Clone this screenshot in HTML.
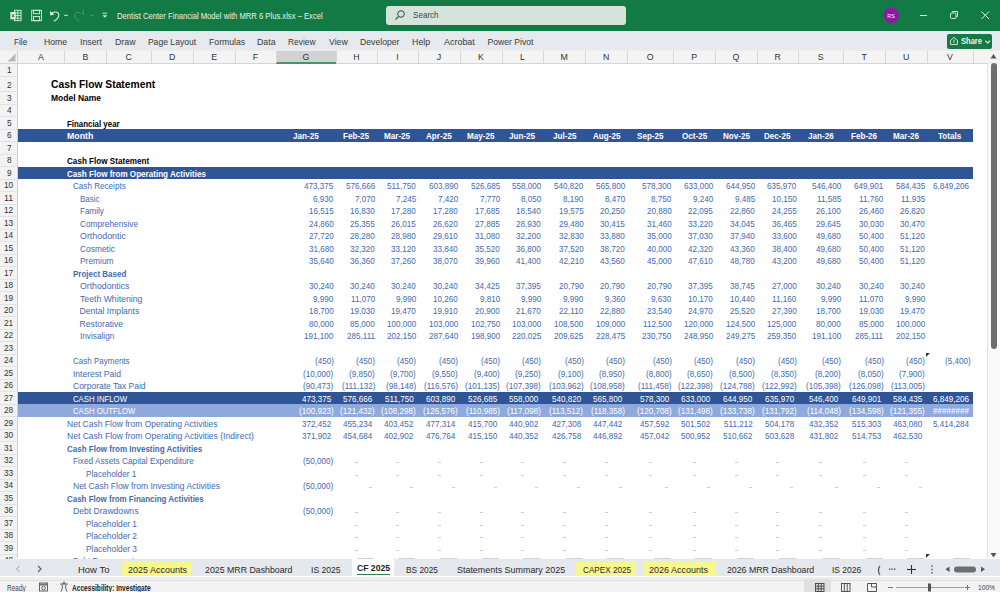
<!DOCTYPE html>
<html><head><meta charset="utf-8"><title>Excel</title>
<style>
html,body{margin:0;padding:0;width:1000px;height:592px;overflow:hidden;background:#fff;}
body{position:relative;font-family:"Liberation Sans", sans-serif;}
span{position:absolute;white-space:pre;font-family:"Liberation Sans", sans-serif;}
</style></head><body>
<div style="position:absolute;left:0px;top:0px;width:1000px;height:31px;background:#117A45;"></div>
<div style="position:absolute;left:385.5px;top:5.5px;width:240.0px;height:19.5px;background:#D5E4DA;border-radius:3px;"></div>
<span style="left:413.00px;top:10.92px;font-size:8.6px;line-height:8.6px;color:#3B4A40;font-weight:normal;transform:scaleX(0.9402);transform-origin:0 0;">Search</span>
<svg style="position:absolute;left:394px;top:9px" width="12" height="12" viewBox="0 0 12 12"><circle cx="7" cy="5" r="3.3" fill="none" stroke="#3B4A40" stroke-width="1"/><line x1="4.6" y1="7.4" x2="1.5" y2="10.5" stroke="#3B4A40" stroke-width="1.1"/></svg>
<span style="left:117.30px;top:11.92px;font-size:8.6px;line-height:8.6px;color:#E6F2EA;font-weight:normal;transform:scaleX(0.8899);transform-origin:0 0;">Dentist Center Financial Model with MRR 6 Plus.xlsx – Excel</span>
<svg style="position:absolute;left:0;top:0" width="120" height="31" viewBox="0 0 120 31">
<g fill="none" stroke="#DDEFE3" stroke-width="0.9">
<rect x="14.5" y="10.3" width="6.6" height="10.4"/>
<line x1="14.5" y1="13" x2="21.1" y2="13"/><line x1="14.5" y1="15.6" x2="21.1" y2="15.6"/><line x1="14.5" y1="18.2" x2="21.1" y2="18.2"/>
<line x1="17.8" y1="10.3" x2="17.8" y2="20.7"/>
</g>
<rect x="10.3" y="12" width="5.5" height="7.3" fill="#DDEFE3"/>
<path d="M11.9 14.2 L14.2 17.2 M14.2 14.2 L11.9 17.2" stroke="#1A6B40" stroke-width="0.9"/>
<g fill="none" stroke="#DDEFE3" stroke-width="0.9">
<rect x="31.7" y="10.3" width="9.8" height="10.4"/>
<rect x="33.6" y="10.3" width="6" height="3.4"/>
<rect x="33.6" y="16.5" width="6" height="4.2"/>
</g>
<g fill="none" stroke="#DDEFE3" stroke-width="1.1">
<path d="M51.3 13.8 C53.5 11.2 58.8 11.3 58.8 15.2 C58.8 17.8 56.5 19.6 53.8 21.2"/>
</g>
<path d="M49.8 11 L50.3 15.6 L54.5 14.6 Z" fill="#DDEFE3"/>
<line x1="64.2" y1="15.3" x2="67.8" y2="15.3" stroke="#DDEFE3" stroke-width="1"/>
<g fill="none" stroke="#4E9C70" stroke-width="1">
<path d="M81 13.8 C79 11.5 74.8 11.8 74.8 15.2 C74.8 17.8 77 19.6 79.2 21"/>
<line x1="83.2" y1="9.5" x2="83.2" y2="15"/>
<line x1="90" y1="15.3" x2="93.5" y2="15.3"/>
</g>
<line x1="102.5" y1="13.2" x2="107.2" y2="13.2" stroke="#DDEFE3" stroke-width="0.9"/>
<path d="M102.5 15.3 L107.2 15.3 L104.85 17.8 Z" fill="#DDEFE3"/>
</svg>
<svg style="position:absolute;left:870px;top:0" width="130" height="31" viewBox="0 0 130 31">
<circle cx="21.2" cy="15.3" r="7.8" fill="#8C1BA3"/>
<text x="21" y="18" text-anchor="middle" font-family="Liberation Sans" font-size="5.5" fill="#F5E8F8">RS</text>
<line x1="50" y1="15.5" x2="57" y2="15.5" stroke="#E3F1E8" stroke-width="1"/>
<g fill="none" stroke="#E3F1E8" stroke-width="0.9"><rect x="80.5" y="13" width="5.5" height="5.5" rx="1"/><path d="M82.3 12.5 L82.3 11.5 L87.5 11.5 L87.5 16.7 L86.5 16.7"/></g>
<g stroke="#E3F1E8" stroke-width="1"><line x1="111.5" y1="11.5" x2="119" y2="19"/><line x1="119" y1="11.5" x2="111.5" y2="19"/></g>
</svg>
<div style="position:absolute;left:0px;top:31px;width:1000px;height:17.5px;background:#E6E9ED;"></div>
<span style="left:14.00px;top:37.72px;font-size:8.6px;line-height:8.6px;color:#3A3A3A;font-weight:normal;transform:scaleX(0.9533);transform-origin:0 0;">File</span>
<span style="left:44.00px;top:37.72px;font-size:8.6px;line-height:8.6px;color:#3A3A3A;font-weight:normal;transform:scaleX(1.0121);transform-origin:0 0;">Home</span>
<span style="left:80.40px;top:37.72px;font-size:8.6px;line-height:8.6px;color:#3A3A3A;font-weight:normal;transform:scaleX(1.0143);transform-origin:0 0;">Insert</span>
<span style="left:114.80px;top:37.72px;font-size:8.6px;line-height:8.6px;color:#3A3A3A;font-weight:normal;transform:scaleX(1.0223);transform-origin:0 0;">Draw</span>
<span style="left:147.90px;top:37.72px;font-size:8.6px;line-height:8.6px;color:#3A3A3A;font-weight:normal;">Page Layout</span>
<span style="left:209.20px;top:37.72px;font-size:8.6px;line-height:8.6px;color:#3A3A3A;font-weight:normal;transform:scaleX(1.0108);transform-origin:0 0;">Formulas</span>
<span style="left:257.00px;top:37.72px;font-size:8.6px;line-height:8.6px;color:#3A3A3A;font-weight:normal;transform:scaleX(1.0191);transform-origin:0 0;">Data</span>
<span style="left:288.20px;top:37.72px;font-size:8.6px;line-height:8.6px;color:#3A3A3A;font-weight:normal;transform:scaleX(0.9760);transform-origin:0 0;">Review</span>
<span style="left:328.80px;top:37.72px;font-size:8.6px;line-height:8.6px;color:#3A3A3A;font-weight:normal;transform:scaleX(1.0178);transform-origin:0 0;">View</span>
<span style="left:360.20px;top:37.72px;font-size:8.6px;line-height:8.6px;color:#3A3A3A;font-weight:normal;transform:scaleX(1.0084);transform-origin:0 0;">Developer</span>
<span style="left:412.30px;top:37.72px;font-size:8.6px;line-height:8.6px;color:#3A3A3A;font-weight:normal;transform:scaleX(1.0297);transform-origin:0 0;">Help</span>
<span style="left:443.70px;top:37.72px;font-size:8.6px;line-height:8.6px;color:#3A3A3A;font-weight:normal;transform:scaleX(1.0400);transform-origin:0 0;">Acrobat</span>
<span style="left:487.60px;top:37.72px;font-size:8.6px;line-height:8.6px;color:#3A3A3A;font-weight:normal;">Power Pivot</span>
<div style="position:absolute;left:946.5px;top:33.5px;width:45.5px;height:15.0px;background:#177A46;border-radius:2px;"></div>
<span style="left:960.50px;top:37.35px;font-size:8.8px;line-height:8.8px;color:#E8F5EC;font-weight:bold;transform:scaleX(0.8589);transform-origin:0 0;">Share</span>
<svg style="position:absolute;left:946px;top:33px" width="46" height="16" viewBox="0 0 46 16">
<g fill="none" stroke="#D9EEDF" stroke-width="0.9"><path d="M4.5 7.5 L4.5 11.5 L11.5 11.5 L11.5 7.5"/><path d="M4.2 7.8 L8 4.3 L11.8 7.8"/><path d="M8 6.5 L8 10"/>
</g><path d="M39.3 7.7 L41.7 9.9 L44.1 7.7" fill="none" stroke="#D9EEDF" stroke-width="1.2"/></svg>
<div style="position:absolute;left:0px;top:48.5px;width:1000px;height:15.5px;background:#F4F4F4;"></div>
<div style="position:absolute;left:0px;top:48.5px;width:1000px;height:2.5px;background:#ECECEC;"></div>
<div style="position:absolute;left:0px;top:63px;width:988px;height:1px;background:#D6D6D6;"></div>
<svg style="position:absolute;left:0;top:50px" width="18" height="14"><path d="M15.5 3.5 L15.5 11.5 L7.5 11.5 Z" fill="#B8B8B8"/></svg>
<div style="position:absolute;left:17px;top:50px;width:1px;height:14px;background:#D0D0D0;"></div>
<div style="position:absolute;left:276px;top:50.5px;width:60px;height:13.0px;background:#D2D2D2;"></div>
<div style="position:absolute;left:276px;top:62.2px;width:60px;height:1.3999999999999986px;background:#4A9468;"></div>
<div style="position:absolute;left:64.0px;top:51px;width:1.0px;height:12px;background:#D8D8D8;"></div>
<div style="position:absolute;left:106.0px;top:51px;width:1.0px;height:12px;background:#D8D8D8;"></div>
<div style="position:absolute;left:150.5px;top:51px;width:1.0px;height:12px;background:#D8D8D8;"></div>
<div style="position:absolute;left:193.0px;top:51px;width:1.0px;height:12px;background:#D8D8D8;"></div>
<div style="position:absolute;left:234.5px;top:51px;width:1.0px;height:12px;background:#D8D8D8;"></div>
<div style="position:absolute;left:275.5px;top:51px;width:1.0px;height:12px;background:#D8D8D8;"></div>
<div style="position:absolute;left:335.5px;top:51px;width:1.0px;height:12px;background:#D8D8D8;"></div>
<div style="position:absolute;left:376.5px;top:51px;width:1.0px;height:12px;background:#D8D8D8;"></div>
<div style="position:absolute;left:417.5px;top:51px;width:1.0px;height:12px;background:#D8D8D8;"></div>
<div style="position:absolute;left:459.5px;top:51px;width:1.0px;height:12px;background:#D8D8D8;"></div>
<div style="position:absolute;left:501.5px;top:51px;width:1.0px;height:12px;background:#D8D8D8;"></div>
<div style="position:absolute;left:542.5px;top:51px;width:1.0px;height:12px;background:#D8D8D8;"></div>
<div style="position:absolute;left:585.0px;top:51px;width:1.0px;height:12px;background:#D8D8D8;"></div>
<div style="position:absolute;left:626.5px;top:51px;width:1.0px;height:12px;background:#D8D8D8;"></div>
<div style="position:absolute;left:673.0px;top:51px;width:1.0px;height:12px;background:#D8D8D8;"></div>
<div style="position:absolute;left:714.5px;top:51px;width:1.0px;height:12px;background:#D8D8D8;"></div>
<div style="position:absolute;left:756.5px;top:51px;width:1.0px;height:12px;background:#D8D8D8;"></div>
<div style="position:absolute;left:798.0px;top:51px;width:1.0px;height:12px;background:#D8D8D8;"></div>
<div style="position:absolute;left:842.5px;top:51px;width:1.0px;height:12px;background:#D8D8D8;"></div>
<div style="position:absolute;left:885.0px;top:51px;width:1.0px;height:12px;background:#D8D8D8;"></div>
<div style="position:absolute;left:926.5px;top:51px;width:1.0px;height:12px;background:#D8D8D8;"></div>
<div style="position:absolute;left:972.5px;top:51px;width:1.0px;height:12px;background:#D8D8D8;"></div>
<span style="left:38.07px;top:52.55px;font-size:8.8px;line-height:8.8px;color:#333333;font-weight:normal;">A</span>
<span style="left:82.57px;top:52.55px;font-size:8.8px;line-height:8.8px;color:#333333;font-weight:normal;">B</span>
<span style="left:125.57px;top:52.55px;font-size:8.8px;line-height:8.8px;color:#333333;font-weight:normal;">C</span>
<span style="left:169.07px;top:52.55px;font-size:8.8px;line-height:8.8px;color:#333333;font-weight:normal;">D</span>
<span style="left:211.32px;top:52.55px;font-size:8.8px;line-height:8.8px;color:#333333;font-weight:normal;">E</span>
<span style="left:252.81px;top:52.55px;font-size:8.8px;line-height:8.8px;color:#333333;font-weight:normal;">F</span>
<span style="left:302.58px;top:52.55px;font-size:8.8px;line-height:8.8px;color:#333333;font-weight:normal;">G</span>
<span style="left:353.32px;top:52.55px;font-size:8.8px;line-height:8.8px;color:#333333;font-weight:normal;">H</span>
<span style="left:396.28px;top:52.55px;font-size:8.8px;line-height:8.8px;color:#333333;font-weight:normal;">I</span>
<span style="left:436.80px;top:52.55px;font-size:8.8px;line-height:8.8px;color:#333333;font-weight:normal;">J</span>
<span style="left:478.07px;top:52.55px;font-size:8.8px;line-height:8.8px;color:#333333;font-weight:normal;">K</span>
<span style="left:520.05px;top:52.55px;font-size:8.8px;line-height:8.8px;color:#333333;font-weight:normal;">L</span>
<span style="left:560.59px;top:52.55px;font-size:8.8px;line-height:8.8px;color:#333333;font-weight:normal;">M</span>
<span style="left:603.07px;top:52.55px;font-size:8.8px;line-height:8.8px;color:#333333;font-weight:normal;">N</span>
<span style="left:646.83px;top:52.55px;font-size:8.8px;line-height:8.8px;color:#333333;font-weight:normal;">O</span>
<span style="left:691.32px;top:52.55px;font-size:8.8px;line-height:8.8px;color:#333333;font-weight:normal;">P</span>
<span style="left:732.58px;top:52.55px;font-size:8.8px;line-height:8.8px;color:#333333;font-weight:normal;">Q</span>
<span style="left:774.57px;top:52.55px;font-size:8.8px;line-height:8.8px;color:#333333;font-weight:normal;">R</span>
<span style="left:817.82px;top:52.55px;font-size:8.8px;line-height:8.8px;color:#333333;font-weight:normal;">S</span>
<span style="left:861.56px;top:52.55px;font-size:8.8px;line-height:8.8px;color:#333333;font-weight:normal;">T</span>
<span style="left:903.07px;top:52.55px;font-size:8.8px;line-height:8.8px;color:#333333;font-weight:normal;">U</span>
<span style="left:947.07px;top:52.55px;font-size:8.8px;line-height:8.8px;color:#333333;font-weight:normal;">V</span>
<div style="position:absolute;left:0px;top:64px;width:17.5px;height:494px;background:#F3F3F3;"></div>
<div style="position:absolute;left:17px;top:64px;width:1px;height:494px;background:#D0D0D0;"></div>
<div style="position:absolute;left:0px;top:76.0px;width:17px;height:1.0px;background:#E2E2E2;"></div>
<span style="left:6.70px;top:66.48px;font-size:9.0px;line-height:9.0px;color:#333333;font-weight:normal;transform:scaleX(0.9190);transform-origin:0 0;">1</span>
<div style="position:absolute;left:0px;top:91.0px;width:17px;height:1.0px;background:#E2E2E2;"></div>
<span style="left:6.70px;top:81.48px;font-size:9.0px;line-height:9.0px;color:#333333;font-weight:normal;transform:scaleX(0.9190);transform-origin:0 0;">2</span>
<div style="position:absolute;left:0px;top:103.5px;width:17px;height:1.0px;background:#E2E2E2;"></div>
<span style="left:6.70px;top:93.98px;font-size:9.0px;line-height:9.0px;color:#333333;font-weight:normal;transform:scaleX(0.9190);transform-origin:0 0;">3</span>
<div style="position:absolute;left:0px;top:116.0px;width:17px;height:1.0px;background:#E2E2E2;"></div>
<span style="left:6.70px;top:106.48px;font-size:9.0px;line-height:9.0px;color:#333333;font-weight:normal;transform:scaleX(0.9190);transform-origin:0 0;">4</span>
<div style="position:absolute;left:0px;top:128.5px;width:17px;height:1.0px;background:#E2E2E2;"></div>
<span style="left:6.70px;top:118.98px;font-size:9.0px;line-height:9.0px;color:#333333;font-weight:normal;transform:scaleX(0.9190);transform-origin:0 0;">5</span>
<div style="position:absolute;left:0px;top:141.0px;width:17px;height:1.0px;background:#E2E2E2;"></div>
<span style="left:6.70px;top:131.48px;font-size:9.0px;line-height:9.0px;color:#333333;font-weight:normal;transform:scaleX(0.9190);transform-origin:0 0;">6</span>
<div style="position:absolute;left:0px;top:153.5px;width:17px;height:1.0px;background:#E2E2E2;"></div>
<span style="left:6.70px;top:143.98px;font-size:9.0px;line-height:9.0px;color:#333333;font-weight:normal;transform:scaleX(0.9190);transform-origin:0 0;">7</span>
<div style="position:absolute;left:0px;top:166.0px;width:17px;height:1.0px;background:#E2E2E2;"></div>
<span style="left:6.70px;top:156.48px;font-size:9.0px;line-height:9.0px;color:#333333;font-weight:normal;transform:scaleX(0.9190);transform-origin:0 0;">8</span>
<div style="position:absolute;left:0px;top:178.5px;width:17px;height:1.0px;background:#E2E2E2;"></div>
<span style="left:6.70px;top:168.98px;font-size:9.0px;line-height:9.0px;color:#333333;font-weight:normal;transform:scaleX(0.9190);transform-origin:0 0;">9</span>
<div style="position:absolute;left:0px;top:191.0px;width:17px;height:1.0px;background:#E2E2E2;"></div>
<span style="left:4.40px;top:181.48px;font-size:9.0px;line-height:9.0px;color:#333333;font-weight:normal;transform:scaleX(0.9190);transform-origin:0 0;">10</span>
<div style="position:absolute;left:0px;top:203.5px;width:17px;height:1.0px;background:#E2E2E2;"></div>
<span style="left:4.40px;top:193.98px;font-size:9.0px;line-height:9.0px;color:#333333;font-weight:normal;transform:scaleX(0.9847);transform-origin:0 0;">11</span>
<div style="position:absolute;left:0px;top:216.0px;width:17px;height:1.0px;background:#E2E2E2;"></div>
<span style="left:4.40px;top:206.48px;font-size:9.0px;line-height:9.0px;color:#333333;font-weight:normal;transform:scaleX(0.9190);transform-origin:0 0;">12</span>
<div style="position:absolute;left:0px;top:228.5px;width:17px;height:1.0px;background:#E2E2E2;"></div>
<span style="left:4.40px;top:218.98px;font-size:9.0px;line-height:9.0px;color:#333333;font-weight:normal;transform:scaleX(0.9190);transform-origin:0 0;">13</span>
<div style="position:absolute;left:0px;top:241.0px;width:17px;height:1.0px;background:#E2E2E2;"></div>
<span style="left:4.40px;top:231.48px;font-size:9.0px;line-height:9.0px;color:#333333;font-weight:normal;transform:scaleX(0.9190);transform-origin:0 0;">14</span>
<div style="position:absolute;left:0px;top:253.5px;width:17px;height:1.0px;background:#E2E2E2;"></div>
<span style="left:4.40px;top:243.98px;font-size:9.0px;line-height:9.0px;color:#333333;font-weight:normal;transform:scaleX(0.9190);transform-origin:0 0;">15</span>
<div style="position:absolute;left:0px;top:266.0px;width:17px;height:1.0px;background:#E2E2E2;"></div>
<span style="left:4.40px;top:256.48px;font-size:9.0px;line-height:9.0px;color:#333333;font-weight:normal;transform:scaleX(0.9190);transform-origin:0 0;">16</span>
<div style="position:absolute;left:0px;top:278.5px;width:17px;height:1.0px;background:#E2E2E2;"></div>
<span style="left:4.40px;top:268.98px;font-size:9.0px;line-height:9.0px;color:#333333;font-weight:normal;transform:scaleX(0.9190);transform-origin:0 0;">17</span>
<div style="position:absolute;left:0px;top:291.0px;width:17px;height:1.0px;background:#E2E2E2;"></div>
<span style="left:4.40px;top:281.48px;font-size:9.0px;line-height:9.0px;color:#333333;font-weight:normal;transform:scaleX(0.9190);transform-origin:0 0;">18</span>
<div style="position:absolute;left:0px;top:303.5px;width:17px;height:1.0px;background:#E2E2E2;"></div>
<span style="left:4.40px;top:293.98px;font-size:9.0px;line-height:9.0px;color:#333333;font-weight:normal;transform:scaleX(0.9190);transform-origin:0 0;">19</span>
<div style="position:absolute;left:0px;top:316.0px;width:17px;height:1.0px;background:#E2E2E2;"></div>
<span style="left:4.40px;top:306.48px;font-size:9.0px;line-height:9.0px;color:#333333;font-weight:normal;transform:scaleX(0.9190);transform-origin:0 0;">20</span>
<div style="position:absolute;left:0px;top:328.5px;width:17px;height:1.0px;background:#E2E2E2;"></div>
<span style="left:4.40px;top:318.98px;font-size:9.0px;line-height:9.0px;color:#333333;font-weight:normal;transform:scaleX(0.9190);transform-origin:0 0;">21</span>
<div style="position:absolute;left:0px;top:341.0px;width:17px;height:1.0px;background:#E2E2E2;"></div>
<span style="left:4.40px;top:331.48px;font-size:9.0px;line-height:9.0px;color:#333333;font-weight:normal;transform:scaleX(0.9190);transform-origin:0 0;">22</span>
<div style="position:absolute;left:0px;top:353.5px;width:17px;height:1.0px;background:#E2E2E2;"></div>
<span style="left:4.40px;top:343.98px;font-size:9.0px;line-height:9.0px;color:#333333;font-weight:normal;transform:scaleX(0.9190);transform-origin:0 0;">23</span>
<div style="position:absolute;left:0px;top:366.0px;width:17px;height:1.0px;background:#E2E2E2;"></div>
<span style="left:4.40px;top:356.48px;font-size:9.0px;line-height:9.0px;color:#333333;font-weight:normal;transform:scaleX(0.9190);transform-origin:0 0;">24</span>
<div style="position:absolute;left:0px;top:378.5px;width:17px;height:1.0px;background:#E2E2E2;"></div>
<span style="left:4.40px;top:368.98px;font-size:9.0px;line-height:9.0px;color:#333333;font-weight:normal;transform:scaleX(0.9190);transform-origin:0 0;">25</span>
<div style="position:absolute;left:0px;top:391.0px;width:17px;height:1.0px;background:#E2E2E2;"></div>
<span style="left:4.40px;top:381.48px;font-size:9.0px;line-height:9.0px;color:#333333;font-weight:normal;transform:scaleX(0.9190);transform-origin:0 0;">26</span>
<div style="position:absolute;left:0px;top:403.5px;width:17px;height:1.0px;background:#E2E2E2;"></div>
<span style="left:4.40px;top:393.98px;font-size:9.0px;line-height:9.0px;color:#333333;font-weight:normal;transform:scaleX(0.9190);transform-origin:0 0;">27</span>
<div style="position:absolute;left:0px;top:416.0px;width:17px;height:1.0px;background:#E2E2E2;"></div>
<span style="left:4.40px;top:406.48px;font-size:9.0px;line-height:9.0px;color:#333333;font-weight:normal;transform:scaleX(0.9190);transform-origin:0 0;">28</span>
<div style="position:absolute;left:0px;top:428.5px;width:17px;height:1.0px;background:#E2E2E2;"></div>
<span style="left:4.40px;top:418.98px;font-size:9.0px;line-height:9.0px;color:#333333;font-weight:normal;transform:scaleX(0.9190);transform-origin:0 0;">29</span>
<div style="position:absolute;left:0px;top:441.0px;width:17px;height:1.0px;background:#E2E2E2;"></div>
<span style="left:4.40px;top:431.48px;font-size:9.0px;line-height:9.0px;color:#333333;font-weight:normal;transform:scaleX(0.9190);transform-origin:0 0;">30</span>
<div style="position:absolute;left:0px;top:453.5px;width:17px;height:1.0px;background:#E2E2E2;"></div>
<span style="left:4.40px;top:443.98px;font-size:9.0px;line-height:9.0px;color:#333333;font-weight:normal;transform:scaleX(0.9190);transform-origin:0 0;">31</span>
<div style="position:absolute;left:0px;top:466.0px;width:17px;height:1.0px;background:#E2E2E2;"></div>
<span style="left:4.40px;top:456.48px;font-size:9.0px;line-height:9.0px;color:#333333;font-weight:normal;transform:scaleX(0.9190);transform-origin:0 0;">32</span>
<div style="position:absolute;left:0px;top:478.5px;width:17px;height:1.0px;background:#E2E2E2;"></div>
<span style="left:4.40px;top:468.98px;font-size:9.0px;line-height:9.0px;color:#333333;font-weight:normal;transform:scaleX(0.9190);transform-origin:0 0;">33</span>
<div style="position:absolute;left:0px;top:491.0px;width:17px;height:1.0px;background:#E2E2E2;"></div>
<span style="left:4.40px;top:481.48px;font-size:9.0px;line-height:9.0px;color:#333333;font-weight:normal;transform:scaleX(0.9190);transform-origin:0 0;">34</span>
<div style="position:absolute;left:0px;top:503.5px;width:17px;height:1.0px;background:#E2E2E2;"></div>
<span style="left:4.40px;top:493.98px;font-size:9.0px;line-height:9.0px;color:#333333;font-weight:normal;transform:scaleX(0.9190);transform-origin:0 0;">35</span>
<div style="position:absolute;left:0px;top:516.0px;width:17px;height:1.0px;background:#E2E2E2;"></div>
<span style="left:4.40px;top:506.48px;font-size:9.0px;line-height:9.0px;color:#333333;font-weight:normal;transform:scaleX(0.9190);transform-origin:0 0;">36</span>
<div style="position:absolute;left:0px;top:528.5px;width:17px;height:1.0px;background:#E2E2E2;"></div>
<span style="left:4.40px;top:518.98px;font-size:9.0px;line-height:9.0px;color:#333333;font-weight:normal;transform:scaleX(0.9190);transform-origin:0 0;">37</span>
<div style="position:absolute;left:0px;top:541.0px;width:17px;height:1.0px;background:#E2E2E2;"></div>
<span style="left:4.40px;top:531.48px;font-size:9.0px;line-height:9.0px;color:#333333;font-weight:normal;transform:scaleX(0.9190);transform-origin:0 0;">38</span>
<div style="position:absolute;left:0px;top:553.5px;width:17px;height:1.0px;background:#E2E2E2;"></div>
<span style="left:4.40px;top:543.98px;font-size:9.0px;line-height:9.0px;color:#333333;font-weight:normal;transform:scaleX(0.9190);transform-origin:0 0;">39</span>
<div style="position:absolute;left:0px;top:566.0px;width:17px;height:1.0px;background:#E2E2E2;"></div>
<span style="left:4.40px;top:556.48px;font-size:9.0px;line-height:9.0px;color:#333333;font-weight:normal;transform:scaleX(0.9190);transform-origin:0 0;">40</span>
<div style="position:absolute;left:18px;top:64px;width:969px;height:494px;background:#FFFFFF;"></div>
<div style="position:absolute;left:18px;top:129.0px;width:955px;height:12.5px;background:#2F5597;"></div>
<div style="position:absolute;left:18px;top:166.5px;width:955px;height:12.5px;background:#2F5597;"></div>
<div style="position:absolute;left:18px;top:391.5px;width:955px;height:12.5px;background:#2F5597;"></div>
<div style="position:absolute;left:18px;top:404.0px;width:955px;height:12.5px;background:#8EA9DB;"></div>
<span style="left:51.00px;top:79.98px;font-size:10.3px;line-height:10.3px;color:#000;font-weight:bold;">Cash Flow Statement</span>
<span style="left:51.00px;top:94.12px;font-size:8.6px;line-height:8.6px;color:#000;font-weight:bold;transform:scaleX(0.9878);transform-origin:0 0;">Model Name</span>
<span style="left:66.90px;top:119.82px;font-size:8.6px;line-height:8.6px;color:#000;font-weight:bold;transform:scaleX(0.9177);transform-origin:0 0;">Financial year</span>
<span style="left:66.90px;top:132.32px;font-size:8.6px;line-height:8.6px;color:#FFFFFF;font-weight:bold;transform:scaleX(1.0245);transform-origin:0 0;">Month</span>
<span style="left:66.70px;top:157.32px;font-size:8.6px;line-height:8.6px;color:#000;font-weight:bold;transform:scaleX(0.9447);transform-origin:0 0;">Cash Flow Statement</span>
<span style="left:66.70px;top:169.82px;font-size:8.6px;line-height:8.6px;color:#FFFFFF;font-weight:bold;transform:scaleX(0.9404);transform-origin:0 0;">Cash Flow from Operating Activities</span>
<span style="left:293.18px;top:132.32px;font-size:8.6px;line-height:8.6px;color:#FFFFFF;font-weight:bold;transform:scaleX(0.9419);transform-origin:0 0;">Jan-25</span>
<span style="left:343.46px;top:132.32px;font-size:8.6px;line-height:8.6px;color:#FFFFFF;font-weight:bold;transform:scaleX(0.9419);transform-origin:0 0;">Feb-25</span>
<span style="left:384.45px;top:132.32px;font-size:8.6px;line-height:8.6px;color:#FFFFFF;font-weight:bold;transform:scaleX(0.9419);transform-origin:0 0;">Mar-25</span>
<span style="left:426.18px;top:132.32px;font-size:8.6px;line-height:8.6px;color:#FFFFFF;font-weight:bold;transform:scaleX(0.9419);transform-origin:0 0;">Apr-25</span>
<span style="left:467.28px;top:132.32px;font-size:8.6px;line-height:8.6px;color:#FFFFFF;font-weight:bold;transform:scaleX(0.9419);transform-origin:0 0;">May-25</span>
<span style="left:509.46px;top:132.32px;font-size:8.6px;line-height:8.6px;color:#FFFFFF;font-weight:bold;transform:scaleX(0.9419);transform-origin:0 0;">Jun-25</span>
<span style="left:552.55px;top:132.32px;font-size:8.6px;line-height:8.6px;color:#FFFFFF;font-weight:bold;transform:scaleX(0.9419);transform-origin:0 0;">Jul-25</span>
<span style="left:592.53px;top:132.32px;font-size:8.6px;line-height:8.6px;color:#FFFFFF;font-weight:bold;transform:scaleX(0.9419);transform-origin:0 0;">Aug-25</span>
<span style="left:636.98px;top:132.32px;font-size:8.6px;line-height:8.6px;color:#FFFFFF;font-weight:bold;transform:scaleX(0.9419);transform-origin:0 0;">Sep-25</span>
<span style="left:681.65px;top:132.32px;font-size:8.6px;line-height:8.6px;color:#FFFFFF;font-weight:bold;transform:scaleX(0.9419);transform-origin:0 0;">Oct-25</span>
<span style="left:722.51px;top:132.32px;font-size:8.6px;line-height:8.6px;color:#FFFFFF;font-weight:bold;transform:scaleX(0.9419);transform-origin:0 0;">Nov-25</span>
<span style="left:764.48px;top:132.32px;font-size:8.6px;line-height:8.6px;color:#FFFFFF;font-weight:bold;transform:scaleX(0.9419);transform-origin:0 0;">Dec-25</span>
<span style="left:807.93px;top:132.32px;font-size:8.6px;line-height:8.6px;color:#FFFFFF;font-weight:bold;transform:scaleX(0.9419);transform-origin:0 0;">Jan-26</span>
<span style="left:851.21px;top:132.32px;font-size:8.6px;line-height:8.6px;color:#FFFFFF;font-weight:bold;transform:scaleX(0.9419);transform-origin:0 0;">Feb-26</span>
<span style="left:893.20px;top:132.32px;font-size:8.6px;line-height:8.6px;color:#FFFFFF;font-weight:bold;transform:scaleX(0.9419);transform-origin:0 0;">Mar-26</span>
<span style="left:938.38px;top:132.32px;font-size:8.6px;line-height:8.6px;color:#FFFFFF;font-weight:bold;transform:scaleX(0.9419);transform-origin:0 0;">Totals</span>
<span style="left:72.90px;top:182.32px;font-size:8.6px;line-height:8.6px;color:#416BAE;font-weight:normal;transform:scaleX(0.9431);transform-origin:0 0;">Cash Receipts</span>
<span style="left:79.60px;top:194.82px;font-size:8.6px;line-height:8.6px;color:#416BAE;font-weight:normal;transform:scaleX(0.9327);transform-origin:0 0;">Basic</span>
<span style="left:79.60px;top:207.32px;font-size:8.6px;line-height:8.6px;color:#416BAE;font-weight:normal;transform:scaleX(0.9446);transform-origin:0 0;">Family</span>
<span style="left:79.60px;top:219.82px;font-size:8.6px;line-height:8.6px;color:#416BAE;font-weight:normal;transform:scaleX(0.9637);transform-origin:0 0;">Comprehensive</span>
<span style="left:79.60px;top:232.32px;font-size:8.6px;line-height:8.6px;color:#416BAE;font-weight:normal;transform:scaleX(1.0333);transform-origin:0 0;">Orthodontic</span>
<span style="left:79.60px;top:244.82px;font-size:8.6px;line-height:8.6px;color:#416BAE;font-weight:normal;transform:scaleX(0.9773);transform-origin:0 0;">Cosmetic</span>
<span style="left:79.60px;top:257.32px;font-size:8.6px;line-height:8.6px;color:#416BAE;font-weight:normal;transform:scaleX(0.9774);transform-origin:0 0;">Premium</span>
<span style="left:73.20px;top:269.82px;font-size:8.6px;line-height:8.6px;color:#416BAE;font-weight:bold;transform:scaleX(0.9300);transform-origin:0 0;">Project Based</span>
<span style="left:79.60px;top:282.32px;font-size:8.6px;line-height:8.6px;color:#416BAE;font-weight:normal;transform:scaleX(1.0140);transform-origin:0 0;">Orthodontics</span>
<span style="left:79.60px;top:294.82px;font-size:8.6px;line-height:8.6px;color:#416BAE;font-weight:normal;transform:scaleX(1.0110);transform-origin:0 0;">Teeth Whitening</span>
<span style="left:79.60px;top:307.32px;font-size:8.6px;line-height:8.6px;color:#416BAE;font-weight:normal;">Dental Implants</span>
<span style="left:79.60px;top:319.82px;font-size:8.6px;line-height:8.6px;color:#416BAE;font-weight:normal;">Restorative</span>
<span style="left:79.60px;top:332.32px;font-size:8.6px;line-height:8.6px;color:#416BAE;font-weight:normal;transform:scaleX(0.9574);transform-origin:0 0;">Invisalign</span>
<span style="left:73.00px;top:357.32px;font-size:8.6px;line-height:8.6px;color:#416BAE;font-weight:normal;transform:scaleX(0.9331);transform-origin:0 0;">Cash Payments</span>
<span style="left:73.00px;top:369.82px;font-size:8.6px;line-height:8.6px;color:#416BAE;font-weight:normal;transform:scaleX(0.9928);transform-origin:0 0;">Interest Paid</span>
<span style="left:73.00px;top:382.32px;font-size:8.6px;line-height:8.6px;color:#416BAE;font-weight:normal;transform:scaleX(0.9883);transform-origin:0 0;">Corporate Tax Paid</span>
<span style="left:73.00px;top:394.82px;font-size:8.6px;line-height:8.6px;color:#FFFFFF;font-weight:normal;transform:scaleX(0.9048);transform-origin:0 0;">CASH INFLOW</span>
<span style="left:73.00px;top:407.32px;font-size:8.6px;line-height:8.6px;color:#FFFFFF;font-weight:normal;transform:scaleX(0.9000);transform-origin:0 0;">CASH OUTFLOW</span>
<span style="left:67.00px;top:419.82px;font-size:8.6px;line-height:8.6px;color:#416BAE;font-weight:normal;transform:scaleX(0.9912);transform-origin:0 0;">Net Cash Flow from Operating Activities</span>
<span style="left:67.00px;top:432.32px;font-size:8.6px;line-height:8.6px;color:#416BAE;font-weight:normal;transform:scaleX(0.9935);transform-origin:0 0;">Net Cash Flow from Operating Activities (Indirect)</span>
<span style="left:67.00px;top:444.82px;font-size:8.6px;line-height:8.6px;color:#416BAE;font-weight:bold;transform:scaleX(0.9328);transform-origin:0 0;">Cash Flow from Investing Activities</span>
<span style="left:73.00px;top:457.32px;font-size:8.6px;line-height:8.6px;color:#416BAE;font-weight:normal;transform:scaleX(0.9591);transform-origin:0 0;">Fixed Assets Capital Expenditure</span>
<span style="left:85.60px;top:469.82px;font-size:8.6px;line-height:8.6px;color:#416BAE;font-weight:normal;transform:scaleX(0.9591);transform-origin:0 0;">Placeholder 1</span>
<span style="left:73.00px;top:482.32px;font-size:8.6px;line-height:8.6px;color:#416BAE;font-weight:normal;transform:scaleX(0.9893);transform-origin:0 0;">Net Cash Flow from Investing Activities</span>
<span style="left:67.00px;top:494.82px;font-size:8.6px;line-height:8.6px;color:#416BAE;font-weight:bold;transform:scaleX(0.9256);transform-origin:0 0;">Cash Flow from Financing Activities</span>
<span style="left:73.00px;top:507.32px;font-size:8.6px;line-height:8.6px;color:#416BAE;font-weight:normal;">Debt Drawdowns</span>
<span style="left:85.60px;top:519.82px;font-size:8.6px;line-height:8.6px;color:#416BAE;font-weight:normal;transform:scaleX(0.9705);transform-origin:0 0;">Placeholder 1</span>
<span style="left:85.60px;top:532.32px;font-size:8.6px;line-height:8.6px;color:#416BAE;font-weight:normal;transform:scaleX(0.9705);transform-origin:0 0;">Placeholder 2</span>
<span style="left:85.60px;top:544.82px;font-size:8.6px;line-height:8.6px;color:#416BAE;font-weight:normal;transform:scaleX(0.9705);transform-origin:0 0;">Placeholder 3</span>
<span style="left:73.00px;top:557.32px;font-size:8.6px;line-height:8.6px;color:#416BAE;font-weight:normal;transform:scaleX(0.9419);transform-origin:0 0;">Debt Repayments</span>
<span style="left:304.04px;top:182.32px;font-size:8.6px;line-height:8.6px;color:#416BAE;font-weight:normal;transform:scaleX(0.9419);transform-origin:0 0;">473,375</span>
<span style="left:345.64px;top:182.32px;font-size:8.6px;line-height:8.6px;color:#416BAE;font-weight:normal;transform:scaleX(0.9419);transform-origin:0 0;">576,666</span>
<span style="left:387.24px;top:182.32px;font-size:8.6px;line-height:8.6px;color:#416BAE;font-weight:normal;transform:scaleX(0.9419);transform-origin:0 0;">511,750</span>
<span style="left:428.64px;top:182.32px;font-size:8.6px;line-height:8.6px;color:#416BAE;font-weight:normal;transform:scaleX(0.9419);transform-origin:0 0;">603,890</span>
<span style="left:470.64px;top:182.32px;font-size:8.6px;line-height:8.6px;color:#416BAE;font-weight:normal;transform:scaleX(0.9419);transform-origin:0 0;">526,685</span>
<span style="left:511.64px;top:182.32px;font-size:8.6px;line-height:8.6px;color:#416BAE;font-weight:normal;transform:scaleX(0.9419);transform-origin:0 0;">558,000</span>
<span style="left:554.14px;top:182.32px;font-size:8.6px;line-height:8.6px;color:#416BAE;font-weight:normal;transform:scaleX(0.9419);transform-origin:0 0;">540,820</span>
<span style="left:595.64px;top:182.32px;font-size:8.6px;line-height:8.6px;color:#416BAE;font-weight:normal;transform:scaleX(0.9419);transform-origin:0 0;">565,800</span>
<span style="left:642.14px;top:182.32px;font-size:8.6px;line-height:8.6px;color:#416BAE;font-weight:normal;transform:scaleX(0.9419);transform-origin:0 0;">578,300</span>
<span style="left:683.64px;top:182.32px;font-size:8.6px;line-height:8.6px;color:#416BAE;font-weight:normal;transform:scaleX(0.9419);transform-origin:0 0;">633,000</span>
<span style="left:725.64px;top:182.32px;font-size:8.6px;line-height:8.6px;color:#416BAE;font-weight:normal;transform:scaleX(0.9419);transform-origin:0 0;">644,950</span>
<span style="left:767.14px;top:182.32px;font-size:8.6px;line-height:8.6px;color:#416BAE;font-weight:normal;transform:scaleX(0.9419);transform-origin:0 0;">635,970</span>
<span style="left:811.64px;top:182.32px;font-size:8.6px;line-height:8.6px;color:#416BAE;font-weight:normal;transform:scaleX(0.9419);transform-origin:0 0;">546,400</span>
<span style="left:854.14px;top:182.32px;font-size:8.6px;line-height:8.6px;color:#416BAE;font-weight:normal;transform:scaleX(0.9419);transform-origin:0 0;">649,901</span>
<span style="left:895.64px;top:182.32px;font-size:8.6px;line-height:8.6px;color:#416BAE;font-weight:normal;transform:scaleX(0.9419);transform-origin:0 0;">584,435</span>
<span style="left:932.59px;top:182.32px;font-size:8.6px;line-height:8.6px;color:#416BAE;font-weight:normal;transform:scaleX(0.9419);transform-origin:0 0;">6,849,206</span>
<span style="left:313.05px;top:194.82px;font-size:8.6px;line-height:8.6px;color:#416BAE;font-weight:normal;transform:scaleX(0.9419);transform-origin:0 0;">6,930</span>
<span style="left:354.65px;top:194.82px;font-size:8.6px;line-height:8.6px;color:#416BAE;font-weight:normal;transform:scaleX(0.9419);transform-origin:0 0;">7,070</span>
<span style="left:395.65px;top:194.82px;font-size:8.6px;line-height:8.6px;color:#416BAE;font-weight:normal;transform:scaleX(0.9419);transform-origin:0 0;">7,245</span>
<span style="left:437.65px;top:194.82px;font-size:8.6px;line-height:8.6px;color:#416BAE;font-weight:normal;transform:scaleX(0.9419);transform-origin:0 0;">7,420</span>
<span style="left:479.65px;top:194.82px;font-size:8.6px;line-height:8.6px;color:#416BAE;font-weight:normal;transform:scaleX(0.9419);transform-origin:0 0;">7,770</span>
<span style="left:520.65px;top:194.82px;font-size:8.6px;line-height:8.6px;color:#416BAE;font-weight:normal;transform:scaleX(0.9419);transform-origin:0 0;">8,050</span>
<span style="left:563.15px;top:194.82px;font-size:8.6px;line-height:8.6px;color:#416BAE;font-weight:normal;transform:scaleX(0.9419);transform-origin:0 0;">8,190</span>
<span style="left:604.65px;top:194.82px;font-size:8.6px;line-height:8.6px;color:#416BAE;font-weight:normal;transform:scaleX(0.9419);transform-origin:0 0;">8,470</span>
<span style="left:651.15px;top:194.82px;font-size:8.6px;line-height:8.6px;color:#416BAE;font-weight:normal;transform:scaleX(0.9419);transform-origin:0 0;">8,750</span>
<span style="left:692.65px;top:194.82px;font-size:8.6px;line-height:8.6px;color:#416BAE;font-weight:normal;transform:scaleX(0.9419);transform-origin:0 0;">9,240</span>
<span style="left:734.65px;top:194.82px;font-size:8.6px;line-height:8.6px;color:#416BAE;font-weight:normal;transform:scaleX(0.9419);transform-origin:0 0;">9,485</span>
<span style="left:771.64px;top:194.82px;font-size:8.6px;line-height:8.6px;color:#416BAE;font-weight:normal;transform:scaleX(0.9419);transform-origin:0 0;">10,150</span>
<span style="left:816.75px;top:194.82px;font-size:8.6px;line-height:8.6px;color:#416BAE;font-weight:normal;transform:scaleX(0.9419);transform-origin:0 0;">11,585</span>
<span style="left:859.25px;top:194.82px;font-size:8.6px;line-height:8.6px;color:#416BAE;font-weight:normal;transform:scaleX(0.9419);transform-origin:0 0;">11,760</span>
<span style="left:900.75px;top:194.82px;font-size:8.6px;line-height:8.6px;color:#416BAE;font-weight:normal;transform:scaleX(0.9419);transform-origin:0 0;">11,935</span>
<span style="left:308.54px;top:207.32px;font-size:8.6px;line-height:8.6px;color:#416BAE;font-weight:normal;transform:scaleX(0.9419);transform-origin:0 0;">16,515</span>
<span style="left:350.14px;top:207.32px;font-size:8.6px;line-height:8.6px;color:#416BAE;font-weight:normal;transform:scaleX(0.9419);transform-origin:0 0;">16,830</span>
<span style="left:391.14px;top:207.32px;font-size:8.6px;line-height:8.6px;color:#416BAE;font-weight:normal;transform:scaleX(0.9419);transform-origin:0 0;">17,280</span>
<span style="left:433.14px;top:207.32px;font-size:8.6px;line-height:8.6px;color:#416BAE;font-weight:normal;transform:scaleX(0.9419);transform-origin:0 0;">17,280</span>
<span style="left:475.14px;top:207.32px;font-size:8.6px;line-height:8.6px;color:#416BAE;font-weight:normal;transform:scaleX(0.9419);transform-origin:0 0;">17,685</span>
<span style="left:516.14px;top:207.32px;font-size:8.6px;line-height:8.6px;color:#416BAE;font-weight:normal;transform:scaleX(0.9419);transform-origin:0 0;">18,540</span>
<span style="left:558.64px;top:207.32px;font-size:8.6px;line-height:8.6px;color:#416BAE;font-weight:normal;transform:scaleX(0.9419);transform-origin:0 0;">19,575</span>
<span style="left:600.14px;top:207.32px;font-size:8.6px;line-height:8.6px;color:#416BAE;font-weight:normal;transform:scaleX(0.9419);transform-origin:0 0;">20,250</span>
<span style="left:646.64px;top:207.32px;font-size:8.6px;line-height:8.6px;color:#416BAE;font-weight:normal;transform:scaleX(0.9419);transform-origin:0 0;">20,880</span>
<span style="left:688.14px;top:207.32px;font-size:8.6px;line-height:8.6px;color:#416BAE;font-weight:normal;transform:scaleX(0.9419);transform-origin:0 0;">22,095</span>
<span style="left:730.14px;top:207.32px;font-size:8.6px;line-height:8.6px;color:#416BAE;font-weight:normal;transform:scaleX(0.9419);transform-origin:0 0;">22,860</span>
<span style="left:771.64px;top:207.32px;font-size:8.6px;line-height:8.6px;color:#416BAE;font-weight:normal;transform:scaleX(0.9419);transform-origin:0 0;">24,255</span>
<span style="left:816.14px;top:207.32px;font-size:8.6px;line-height:8.6px;color:#416BAE;font-weight:normal;transform:scaleX(0.9419);transform-origin:0 0;">26,100</span>
<span style="left:858.64px;top:207.32px;font-size:8.6px;line-height:8.6px;color:#416BAE;font-weight:normal;transform:scaleX(0.9419);transform-origin:0 0;">26,460</span>
<span style="left:900.14px;top:207.32px;font-size:8.6px;line-height:8.6px;color:#416BAE;font-weight:normal;transform:scaleX(0.9419);transform-origin:0 0;">26,820</span>
<span style="left:308.54px;top:219.82px;font-size:8.6px;line-height:8.6px;color:#416BAE;font-weight:normal;transform:scaleX(0.9419);transform-origin:0 0;">24,860</span>
<span style="left:350.14px;top:219.82px;font-size:8.6px;line-height:8.6px;color:#416BAE;font-weight:normal;transform:scaleX(0.9419);transform-origin:0 0;">25,355</span>
<span style="left:391.14px;top:219.82px;font-size:8.6px;line-height:8.6px;color:#416BAE;font-weight:normal;transform:scaleX(0.9419);transform-origin:0 0;">26,015</span>
<span style="left:433.14px;top:219.82px;font-size:8.6px;line-height:8.6px;color:#416BAE;font-weight:normal;transform:scaleX(0.9419);transform-origin:0 0;">26,620</span>
<span style="left:475.14px;top:219.82px;font-size:8.6px;line-height:8.6px;color:#416BAE;font-weight:normal;transform:scaleX(0.9419);transform-origin:0 0;">27,885</span>
<span style="left:516.14px;top:219.82px;font-size:8.6px;line-height:8.6px;color:#416BAE;font-weight:normal;transform:scaleX(0.9419);transform-origin:0 0;">28,930</span>
<span style="left:558.64px;top:219.82px;font-size:8.6px;line-height:8.6px;color:#416BAE;font-weight:normal;transform:scaleX(0.9419);transform-origin:0 0;">29,480</span>
<span style="left:600.14px;top:219.82px;font-size:8.6px;line-height:8.6px;color:#416BAE;font-weight:normal;transform:scaleX(0.9419);transform-origin:0 0;">30,415</span>
<span style="left:646.64px;top:219.82px;font-size:8.6px;line-height:8.6px;color:#416BAE;font-weight:normal;transform:scaleX(0.9419);transform-origin:0 0;">31,460</span>
<span style="left:688.14px;top:219.82px;font-size:8.6px;line-height:8.6px;color:#416BAE;font-weight:normal;transform:scaleX(0.9419);transform-origin:0 0;">33,220</span>
<span style="left:730.14px;top:219.82px;font-size:8.6px;line-height:8.6px;color:#416BAE;font-weight:normal;transform:scaleX(0.9419);transform-origin:0 0;">34,045</span>
<span style="left:771.64px;top:219.82px;font-size:8.6px;line-height:8.6px;color:#416BAE;font-weight:normal;transform:scaleX(0.9419);transform-origin:0 0;">36,465</span>
<span style="left:816.14px;top:219.82px;font-size:8.6px;line-height:8.6px;color:#416BAE;font-weight:normal;transform:scaleX(0.9419);transform-origin:0 0;">29,645</span>
<span style="left:858.64px;top:219.82px;font-size:8.6px;line-height:8.6px;color:#416BAE;font-weight:normal;transform:scaleX(0.9419);transform-origin:0 0;">30,030</span>
<span style="left:900.14px;top:219.82px;font-size:8.6px;line-height:8.6px;color:#416BAE;font-weight:normal;transform:scaleX(0.9419);transform-origin:0 0;">30,470</span>
<span style="left:308.54px;top:232.32px;font-size:8.6px;line-height:8.6px;color:#416BAE;font-weight:normal;transform:scaleX(0.9419);transform-origin:0 0;">27,720</span>
<span style="left:350.14px;top:232.32px;font-size:8.6px;line-height:8.6px;color:#416BAE;font-weight:normal;transform:scaleX(0.9419);transform-origin:0 0;">28,280</span>
<span style="left:391.14px;top:232.32px;font-size:8.6px;line-height:8.6px;color:#416BAE;font-weight:normal;transform:scaleX(0.9419);transform-origin:0 0;">28,980</span>
<span style="left:433.14px;top:232.32px;font-size:8.6px;line-height:8.6px;color:#416BAE;font-weight:normal;transform:scaleX(0.9419);transform-origin:0 0;">29,610</span>
<span style="left:475.14px;top:232.32px;font-size:8.6px;line-height:8.6px;color:#416BAE;font-weight:normal;transform:scaleX(0.9419);transform-origin:0 0;">31,080</span>
<span style="left:516.14px;top:232.32px;font-size:8.6px;line-height:8.6px;color:#416BAE;font-weight:normal;transform:scaleX(0.9419);transform-origin:0 0;">32,200</span>
<span style="left:558.64px;top:232.32px;font-size:8.6px;line-height:8.6px;color:#416BAE;font-weight:normal;transform:scaleX(0.9419);transform-origin:0 0;">32,830</span>
<span style="left:600.14px;top:232.32px;font-size:8.6px;line-height:8.6px;color:#416BAE;font-weight:normal;transform:scaleX(0.9419);transform-origin:0 0;">33,880</span>
<span style="left:646.64px;top:232.32px;font-size:8.6px;line-height:8.6px;color:#416BAE;font-weight:normal;transform:scaleX(0.9419);transform-origin:0 0;">35,000</span>
<span style="left:688.14px;top:232.32px;font-size:8.6px;line-height:8.6px;color:#416BAE;font-weight:normal;transform:scaleX(0.9419);transform-origin:0 0;">37,030</span>
<span style="left:730.14px;top:232.32px;font-size:8.6px;line-height:8.6px;color:#416BAE;font-weight:normal;transform:scaleX(0.9419);transform-origin:0 0;">37,940</span>
<span style="left:771.64px;top:232.32px;font-size:8.6px;line-height:8.6px;color:#416BAE;font-weight:normal;transform:scaleX(0.9419);transform-origin:0 0;">33,600</span>
<span style="left:816.14px;top:232.32px;font-size:8.6px;line-height:8.6px;color:#416BAE;font-weight:normal;transform:scaleX(0.9419);transform-origin:0 0;">49,680</span>
<span style="left:858.64px;top:232.32px;font-size:8.6px;line-height:8.6px;color:#416BAE;font-weight:normal;transform:scaleX(0.9419);transform-origin:0 0;">50,400</span>
<span style="left:900.14px;top:232.32px;font-size:8.6px;line-height:8.6px;color:#416BAE;font-weight:normal;transform:scaleX(0.9419);transform-origin:0 0;">51,120</span>
<span style="left:308.54px;top:244.82px;font-size:8.6px;line-height:8.6px;color:#416BAE;font-weight:normal;transform:scaleX(0.9419);transform-origin:0 0;">31,680</span>
<span style="left:350.14px;top:244.82px;font-size:8.6px;line-height:8.6px;color:#416BAE;font-weight:normal;transform:scaleX(0.9419);transform-origin:0 0;">32,320</span>
<span style="left:391.14px;top:244.82px;font-size:8.6px;line-height:8.6px;color:#416BAE;font-weight:normal;transform:scaleX(0.9419);transform-origin:0 0;">33,120</span>
<span style="left:433.14px;top:244.82px;font-size:8.6px;line-height:8.6px;color:#416BAE;font-weight:normal;transform:scaleX(0.9419);transform-origin:0 0;">33,840</span>
<span style="left:475.14px;top:244.82px;font-size:8.6px;line-height:8.6px;color:#416BAE;font-weight:normal;transform:scaleX(0.9419);transform-origin:0 0;">35,520</span>
<span style="left:516.14px;top:244.82px;font-size:8.6px;line-height:8.6px;color:#416BAE;font-weight:normal;transform:scaleX(0.9419);transform-origin:0 0;">36,800</span>
<span style="left:558.64px;top:244.82px;font-size:8.6px;line-height:8.6px;color:#416BAE;font-weight:normal;transform:scaleX(0.9419);transform-origin:0 0;">37,520</span>
<span style="left:600.14px;top:244.82px;font-size:8.6px;line-height:8.6px;color:#416BAE;font-weight:normal;transform:scaleX(0.9419);transform-origin:0 0;">38,720</span>
<span style="left:646.64px;top:244.82px;font-size:8.6px;line-height:8.6px;color:#416BAE;font-weight:normal;transform:scaleX(0.9419);transform-origin:0 0;">40,000</span>
<span style="left:688.14px;top:244.82px;font-size:8.6px;line-height:8.6px;color:#416BAE;font-weight:normal;transform:scaleX(0.9419);transform-origin:0 0;">42,320</span>
<span style="left:730.14px;top:244.82px;font-size:8.6px;line-height:8.6px;color:#416BAE;font-weight:normal;transform:scaleX(0.9419);transform-origin:0 0;">43,360</span>
<span style="left:771.64px;top:244.82px;font-size:8.6px;line-height:8.6px;color:#416BAE;font-weight:normal;transform:scaleX(0.9419);transform-origin:0 0;">38,400</span>
<span style="left:816.14px;top:244.82px;font-size:8.6px;line-height:8.6px;color:#416BAE;font-weight:normal;transform:scaleX(0.9419);transform-origin:0 0;">49,680</span>
<span style="left:858.64px;top:244.82px;font-size:8.6px;line-height:8.6px;color:#416BAE;font-weight:normal;transform:scaleX(0.9419);transform-origin:0 0;">50,400</span>
<span style="left:900.14px;top:244.82px;font-size:8.6px;line-height:8.6px;color:#416BAE;font-weight:normal;transform:scaleX(0.9419);transform-origin:0 0;">51,120</span>
<span style="left:308.54px;top:257.32px;font-size:8.6px;line-height:8.6px;color:#416BAE;font-weight:normal;transform:scaleX(0.9419);transform-origin:0 0;">35,640</span>
<span style="left:350.14px;top:257.32px;font-size:8.6px;line-height:8.6px;color:#416BAE;font-weight:normal;transform:scaleX(0.9419);transform-origin:0 0;">36,360</span>
<span style="left:391.14px;top:257.32px;font-size:8.6px;line-height:8.6px;color:#416BAE;font-weight:normal;transform:scaleX(0.9419);transform-origin:0 0;">37,260</span>
<span style="left:433.14px;top:257.32px;font-size:8.6px;line-height:8.6px;color:#416BAE;font-weight:normal;transform:scaleX(0.9419);transform-origin:0 0;">38,070</span>
<span style="left:475.14px;top:257.32px;font-size:8.6px;line-height:8.6px;color:#416BAE;font-weight:normal;transform:scaleX(0.9419);transform-origin:0 0;">39,960</span>
<span style="left:516.14px;top:257.32px;font-size:8.6px;line-height:8.6px;color:#416BAE;font-weight:normal;transform:scaleX(0.9419);transform-origin:0 0;">41,400</span>
<span style="left:558.64px;top:257.32px;font-size:8.6px;line-height:8.6px;color:#416BAE;font-weight:normal;transform:scaleX(0.9419);transform-origin:0 0;">42,210</span>
<span style="left:600.14px;top:257.32px;font-size:8.6px;line-height:8.6px;color:#416BAE;font-weight:normal;transform:scaleX(0.9419);transform-origin:0 0;">43,560</span>
<span style="left:646.64px;top:257.32px;font-size:8.6px;line-height:8.6px;color:#416BAE;font-weight:normal;transform:scaleX(0.9419);transform-origin:0 0;">45,000</span>
<span style="left:688.14px;top:257.32px;font-size:8.6px;line-height:8.6px;color:#416BAE;font-weight:normal;transform:scaleX(0.9419);transform-origin:0 0;">47,610</span>
<span style="left:730.14px;top:257.32px;font-size:8.6px;line-height:8.6px;color:#416BAE;font-weight:normal;transform:scaleX(0.9419);transform-origin:0 0;">48,780</span>
<span style="left:771.64px;top:257.32px;font-size:8.6px;line-height:8.6px;color:#416BAE;font-weight:normal;transform:scaleX(0.9419);transform-origin:0 0;">43,200</span>
<span style="left:816.14px;top:257.32px;font-size:8.6px;line-height:8.6px;color:#416BAE;font-weight:normal;transform:scaleX(0.9419);transform-origin:0 0;">49,680</span>
<span style="left:858.64px;top:257.32px;font-size:8.6px;line-height:8.6px;color:#416BAE;font-weight:normal;transform:scaleX(0.9419);transform-origin:0 0;">50,400</span>
<span style="left:900.14px;top:257.32px;font-size:8.6px;line-height:8.6px;color:#416BAE;font-weight:normal;transform:scaleX(0.9419);transform-origin:0 0;">51,120</span>
<span style="left:308.54px;top:282.32px;font-size:8.6px;line-height:8.6px;color:#416BAE;font-weight:normal;transform:scaleX(0.9419);transform-origin:0 0;">30,240</span>
<span style="left:350.14px;top:282.32px;font-size:8.6px;line-height:8.6px;color:#416BAE;font-weight:normal;transform:scaleX(0.9419);transform-origin:0 0;">30,240</span>
<span style="left:391.14px;top:282.32px;font-size:8.6px;line-height:8.6px;color:#416BAE;font-weight:normal;transform:scaleX(0.9419);transform-origin:0 0;">30,240</span>
<span style="left:433.14px;top:282.32px;font-size:8.6px;line-height:8.6px;color:#416BAE;font-weight:normal;transform:scaleX(0.9419);transform-origin:0 0;">30,240</span>
<span style="left:475.14px;top:282.32px;font-size:8.6px;line-height:8.6px;color:#416BAE;font-weight:normal;transform:scaleX(0.9419);transform-origin:0 0;">34,425</span>
<span style="left:516.14px;top:282.32px;font-size:8.6px;line-height:8.6px;color:#416BAE;font-weight:normal;transform:scaleX(0.9419);transform-origin:0 0;">37,395</span>
<span style="left:558.64px;top:282.32px;font-size:8.6px;line-height:8.6px;color:#416BAE;font-weight:normal;transform:scaleX(0.9419);transform-origin:0 0;">20,790</span>
<span style="left:600.14px;top:282.32px;font-size:8.6px;line-height:8.6px;color:#416BAE;font-weight:normal;transform:scaleX(0.9419);transform-origin:0 0;">20,790</span>
<span style="left:646.64px;top:282.32px;font-size:8.6px;line-height:8.6px;color:#416BAE;font-weight:normal;transform:scaleX(0.9419);transform-origin:0 0;">20,790</span>
<span style="left:688.14px;top:282.32px;font-size:8.6px;line-height:8.6px;color:#416BAE;font-weight:normal;transform:scaleX(0.9419);transform-origin:0 0;">37,395</span>
<span style="left:730.14px;top:282.32px;font-size:8.6px;line-height:8.6px;color:#416BAE;font-weight:normal;transform:scaleX(0.9419);transform-origin:0 0;">38,745</span>
<span style="left:771.64px;top:282.32px;font-size:8.6px;line-height:8.6px;color:#416BAE;font-weight:normal;transform:scaleX(0.9419);transform-origin:0 0;">27,000</span>
<span style="left:816.14px;top:282.32px;font-size:8.6px;line-height:8.6px;color:#416BAE;font-weight:normal;transform:scaleX(0.9419);transform-origin:0 0;">30,240</span>
<span style="left:858.64px;top:282.32px;font-size:8.6px;line-height:8.6px;color:#416BAE;font-weight:normal;transform:scaleX(0.9419);transform-origin:0 0;">30,240</span>
<span style="left:900.14px;top:282.32px;font-size:8.6px;line-height:8.6px;color:#416BAE;font-weight:normal;transform:scaleX(0.9419);transform-origin:0 0;">30,240</span>
<span style="left:313.05px;top:294.82px;font-size:8.6px;line-height:8.6px;color:#416BAE;font-weight:normal;transform:scaleX(0.9419);transform-origin:0 0;">9,990</span>
<span style="left:350.75px;top:294.82px;font-size:8.6px;line-height:8.6px;color:#416BAE;font-weight:normal;transform:scaleX(0.9419);transform-origin:0 0;">11,070</span>
<span style="left:395.65px;top:294.82px;font-size:8.6px;line-height:8.6px;color:#416BAE;font-weight:normal;transform:scaleX(0.9419);transform-origin:0 0;">9,990</span>
<span style="left:433.14px;top:294.82px;font-size:8.6px;line-height:8.6px;color:#416BAE;font-weight:normal;transform:scaleX(0.9419);transform-origin:0 0;">10,260</span>
<span style="left:479.65px;top:294.82px;font-size:8.6px;line-height:8.6px;color:#416BAE;font-weight:normal;transform:scaleX(0.9419);transform-origin:0 0;">9,810</span>
<span style="left:520.65px;top:294.82px;font-size:8.6px;line-height:8.6px;color:#416BAE;font-weight:normal;transform:scaleX(0.9419);transform-origin:0 0;">9,990</span>
<span style="left:563.15px;top:294.82px;font-size:8.6px;line-height:8.6px;color:#416BAE;font-weight:normal;transform:scaleX(0.9419);transform-origin:0 0;">9,990</span>
<span style="left:604.65px;top:294.82px;font-size:8.6px;line-height:8.6px;color:#416BAE;font-weight:normal;transform:scaleX(0.9419);transform-origin:0 0;">9,360</span>
<span style="left:651.15px;top:294.82px;font-size:8.6px;line-height:8.6px;color:#416BAE;font-weight:normal;transform:scaleX(0.9419);transform-origin:0 0;">9,630</span>
<span style="left:688.14px;top:294.82px;font-size:8.6px;line-height:8.6px;color:#416BAE;font-weight:normal;transform:scaleX(0.9419);transform-origin:0 0;">10,170</span>
<span style="left:730.14px;top:294.82px;font-size:8.6px;line-height:8.6px;color:#416BAE;font-weight:normal;transform:scaleX(0.9419);transform-origin:0 0;">10,440</span>
<span style="left:772.25px;top:294.82px;font-size:8.6px;line-height:8.6px;color:#416BAE;font-weight:normal;transform:scaleX(0.9419);transform-origin:0 0;">11,160</span>
<span style="left:820.65px;top:294.82px;font-size:8.6px;line-height:8.6px;color:#416BAE;font-weight:normal;transform:scaleX(0.9419);transform-origin:0 0;">9,990</span>
<span style="left:859.25px;top:294.82px;font-size:8.6px;line-height:8.6px;color:#416BAE;font-weight:normal;transform:scaleX(0.9419);transform-origin:0 0;">11,070</span>
<span style="left:904.65px;top:294.82px;font-size:8.6px;line-height:8.6px;color:#416BAE;font-weight:normal;transform:scaleX(0.9419);transform-origin:0 0;">9,990</span>
<span style="left:308.54px;top:307.32px;font-size:8.6px;line-height:8.6px;color:#416BAE;font-weight:normal;transform:scaleX(0.9419);transform-origin:0 0;">18,700</span>
<span style="left:350.14px;top:307.32px;font-size:8.6px;line-height:8.6px;color:#416BAE;font-weight:normal;transform:scaleX(0.9419);transform-origin:0 0;">19,030</span>
<span style="left:391.14px;top:307.32px;font-size:8.6px;line-height:8.6px;color:#416BAE;font-weight:normal;transform:scaleX(0.9419);transform-origin:0 0;">19,470</span>
<span style="left:433.14px;top:307.32px;font-size:8.6px;line-height:8.6px;color:#416BAE;font-weight:normal;transform:scaleX(0.9419);transform-origin:0 0;">19,910</span>
<span style="left:475.14px;top:307.32px;font-size:8.6px;line-height:8.6px;color:#416BAE;font-weight:normal;transform:scaleX(0.9419);transform-origin:0 0;">20,900</span>
<span style="left:516.14px;top:307.32px;font-size:8.6px;line-height:8.6px;color:#416BAE;font-weight:normal;transform:scaleX(0.9419);transform-origin:0 0;">21,670</span>
<span style="left:559.25px;top:307.32px;font-size:8.6px;line-height:8.6px;color:#416BAE;font-weight:normal;transform:scaleX(0.9419);transform-origin:0 0;">22,110</span>
<span style="left:600.14px;top:307.32px;font-size:8.6px;line-height:8.6px;color:#416BAE;font-weight:normal;transform:scaleX(0.9419);transform-origin:0 0;">22,880</span>
<span style="left:646.64px;top:307.32px;font-size:8.6px;line-height:8.6px;color:#416BAE;font-weight:normal;transform:scaleX(0.9419);transform-origin:0 0;">23,540</span>
<span style="left:688.14px;top:307.32px;font-size:8.6px;line-height:8.6px;color:#416BAE;font-weight:normal;transform:scaleX(0.9419);transform-origin:0 0;">24,970</span>
<span style="left:730.14px;top:307.32px;font-size:8.6px;line-height:8.6px;color:#416BAE;font-weight:normal;transform:scaleX(0.9419);transform-origin:0 0;">25,520</span>
<span style="left:771.64px;top:307.32px;font-size:8.6px;line-height:8.6px;color:#416BAE;font-weight:normal;transform:scaleX(0.9419);transform-origin:0 0;">27,390</span>
<span style="left:816.14px;top:307.32px;font-size:8.6px;line-height:8.6px;color:#416BAE;font-weight:normal;transform:scaleX(0.9419);transform-origin:0 0;">18,700</span>
<span style="left:858.64px;top:307.32px;font-size:8.6px;line-height:8.6px;color:#416BAE;font-weight:normal;transform:scaleX(0.9419);transform-origin:0 0;">19,030</span>
<span style="left:900.14px;top:307.32px;font-size:8.6px;line-height:8.6px;color:#416BAE;font-weight:normal;transform:scaleX(0.9419);transform-origin:0 0;">19,470</span>
<span style="left:308.54px;top:319.82px;font-size:8.6px;line-height:8.6px;color:#416BAE;font-weight:normal;transform:scaleX(0.9419);transform-origin:0 0;">80,000</span>
<span style="left:350.14px;top:319.82px;font-size:8.6px;line-height:8.6px;color:#416BAE;font-weight:normal;transform:scaleX(0.9419);transform-origin:0 0;">85,000</span>
<span style="left:386.64px;top:319.82px;font-size:8.6px;line-height:8.6px;color:#416BAE;font-weight:normal;transform:scaleX(0.9419);transform-origin:0 0;">100,000</span>
<span style="left:428.64px;top:319.82px;font-size:8.6px;line-height:8.6px;color:#416BAE;font-weight:normal;transform:scaleX(0.9419);transform-origin:0 0;">103,000</span>
<span style="left:470.64px;top:319.82px;font-size:8.6px;line-height:8.6px;color:#416BAE;font-weight:normal;transform:scaleX(0.9419);transform-origin:0 0;">102,750</span>
<span style="left:511.64px;top:319.82px;font-size:8.6px;line-height:8.6px;color:#416BAE;font-weight:normal;transform:scaleX(0.9419);transform-origin:0 0;">103,000</span>
<span style="left:554.14px;top:319.82px;font-size:8.6px;line-height:8.6px;color:#416BAE;font-weight:normal;transform:scaleX(0.9419);transform-origin:0 0;">108,500</span>
<span style="left:595.64px;top:319.82px;font-size:8.6px;line-height:8.6px;color:#416BAE;font-weight:normal;transform:scaleX(0.9419);transform-origin:0 0;">109,000</span>
<span style="left:642.74px;top:319.82px;font-size:8.6px;line-height:8.6px;color:#416BAE;font-weight:normal;transform:scaleX(0.9419);transform-origin:0 0;">112,500</span>
<span style="left:683.64px;top:319.82px;font-size:8.6px;line-height:8.6px;color:#416BAE;font-weight:normal;transform:scaleX(0.9419);transform-origin:0 0;">120,000</span>
<span style="left:725.64px;top:319.82px;font-size:8.6px;line-height:8.6px;color:#416BAE;font-weight:normal;transform:scaleX(0.9419);transform-origin:0 0;">124,500</span>
<span style="left:767.14px;top:319.82px;font-size:8.6px;line-height:8.6px;color:#416BAE;font-weight:normal;transform:scaleX(0.9419);transform-origin:0 0;">125,000</span>
<span style="left:816.14px;top:319.82px;font-size:8.6px;line-height:8.6px;color:#416BAE;font-weight:normal;transform:scaleX(0.9419);transform-origin:0 0;">80,000</span>
<span style="left:858.64px;top:319.82px;font-size:8.6px;line-height:8.6px;color:#416BAE;font-weight:normal;transform:scaleX(0.9419);transform-origin:0 0;">85,000</span>
<span style="left:895.64px;top:319.82px;font-size:8.6px;line-height:8.6px;color:#416BAE;font-weight:normal;transform:scaleX(0.9419);transform-origin:0 0;">100,000</span>
<span style="left:304.04px;top:332.32px;font-size:8.6px;line-height:8.6px;color:#416BAE;font-weight:normal;transform:scaleX(0.9419);transform-origin:0 0;">191,100</span>
<span style="left:346.85px;top:332.32px;font-size:8.6px;line-height:8.6px;color:#416BAE;font-weight:normal;transform:scaleX(0.9419);transform-origin:0 0;">285,111</span>
<span style="left:386.64px;top:332.32px;font-size:8.6px;line-height:8.6px;color:#416BAE;font-weight:normal;transform:scaleX(0.9419);transform-origin:0 0;">202,150</span>
<span style="left:428.64px;top:332.32px;font-size:8.6px;line-height:8.6px;color:#416BAE;font-weight:normal;transform:scaleX(0.9419);transform-origin:0 0;">287,640</span>
<span style="left:470.64px;top:332.32px;font-size:8.6px;line-height:8.6px;color:#416BAE;font-weight:normal;transform:scaleX(0.9419);transform-origin:0 0;">198,900</span>
<span style="left:511.64px;top:332.32px;font-size:8.6px;line-height:8.6px;color:#416BAE;font-weight:normal;transform:scaleX(0.9419);transform-origin:0 0;">220,025</span>
<span style="left:554.14px;top:332.32px;font-size:8.6px;line-height:8.6px;color:#416BAE;font-weight:normal;transform:scaleX(0.9419);transform-origin:0 0;">209,625</span>
<span style="left:595.64px;top:332.32px;font-size:8.6px;line-height:8.6px;color:#416BAE;font-weight:normal;transform:scaleX(0.9419);transform-origin:0 0;">228,475</span>
<span style="left:642.14px;top:332.32px;font-size:8.6px;line-height:8.6px;color:#416BAE;font-weight:normal;transform:scaleX(0.9419);transform-origin:0 0;">230,750</span>
<span style="left:683.64px;top:332.32px;font-size:8.6px;line-height:8.6px;color:#416BAE;font-weight:normal;transform:scaleX(0.9419);transform-origin:0 0;">248,950</span>
<span style="left:725.64px;top:332.32px;font-size:8.6px;line-height:8.6px;color:#416BAE;font-weight:normal;transform:scaleX(0.9419);transform-origin:0 0;">249,275</span>
<span style="left:767.14px;top:332.32px;font-size:8.6px;line-height:8.6px;color:#416BAE;font-weight:normal;transform:scaleX(0.9419);transform-origin:0 0;">259,350</span>
<span style="left:811.64px;top:332.32px;font-size:8.6px;line-height:8.6px;color:#416BAE;font-weight:normal;transform:scaleX(0.9419);transform-origin:0 0;">191,100</span>
<span style="left:855.35px;top:332.32px;font-size:8.6px;line-height:8.6px;color:#416BAE;font-weight:normal;transform:scaleX(0.9419);transform-origin:0 0;">285,111</span>
<span style="left:895.64px;top:332.32px;font-size:8.6px;line-height:8.6px;color:#416BAE;font-weight:normal;transform:scaleX(0.9419);transform-origin:0 0;">202,150</span>
<span style="left:314.51px;top:357.32px;font-size:8.6px;line-height:8.6px;color:#416BAE;font-weight:normal;transform:scaleX(0.9419);transform-origin:0 0;">(450)</span>
<span style="left:356.11px;top:357.32px;font-size:8.6px;line-height:8.6px;color:#416BAE;font-weight:normal;transform:scaleX(0.9419);transform-origin:0 0;">(450)</span>
<span style="left:397.11px;top:357.32px;font-size:8.6px;line-height:8.6px;color:#416BAE;font-weight:normal;transform:scaleX(0.9419);transform-origin:0 0;">(450)</span>
<span style="left:439.11px;top:357.32px;font-size:8.6px;line-height:8.6px;color:#416BAE;font-weight:normal;transform:scaleX(0.9419);transform-origin:0 0;">(450)</span>
<span style="left:481.11px;top:357.32px;font-size:8.6px;line-height:8.6px;color:#416BAE;font-weight:normal;transform:scaleX(0.9419);transform-origin:0 0;">(450)</span>
<span style="left:522.11px;top:357.32px;font-size:8.6px;line-height:8.6px;color:#416BAE;font-weight:normal;transform:scaleX(0.9419);transform-origin:0 0;">(450)</span>
<span style="left:564.61px;top:357.32px;font-size:8.6px;line-height:8.6px;color:#416BAE;font-weight:normal;transform:scaleX(0.9419);transform-origin:0 0;">(450)</span>
<span style="left:606.11px;top:357.32px;font-size:8.6px;line-height:8.6px;color:#416BAE;font-weight:normal;transform:scaleX(0.9419);transform-origin:0 0;">(450)</span>
<span style="left:652.61px;top:357.32px;font-size:8.6px;line-height:8.6px;color:#416BAE;font-weight:normal;transform:scaleX(0.9419);transform-origin:0 0;">(450)</span>
<span style="left:694.11px;top:357.32px;font-size:8.6px;line-height:8.6px;color:#416BAE;font-weight:normal;transform:scaleX(0.9419);transform-origin:0 0;">(450)</span>
<span style="left:736.11px;top:357.32px;font-size:8.6px;line-height:8.6px;color:#416BAE;font-weight:normal;transform:scaleX(0.9419);transform-origin:0 0;">(450)</span>
<span style="left:777.61px;top:357.32px;font-size:8.6px;line-height:8.6px;color:#416BAE;font-weight:normal;transform:scaleX(0.9419);transform-origin:0 0;">(450)</span>
<span style="left:822.11px;top:357.32px;font-size:8.6px;line-height:8.6px;color:#416BAE;font-weight:normal;transform:scaleX(0.9419);transform-origin:0 0;">(450)</span>
<span style="left:864.61px;top:357.32px;font-size:8.6px;line-height:8.6px;color:#416BAE;font-weight:normal;transform:scaleX(0.9419);transform-origin:0 0;">(450)</span>
<span style="left:906.11px;top:357.32px;font-size:8.6px;line-height:8.6px;color:#416BAE;font-weight:normal;transform:scaleX(0.9419);transform-origin:0 0;">(450)</span>
<span style="left:945.46px;top:357.32px;font-size:8.6px;line-height:8.6px;color:#416BAE;font-weight:normal;transform:scaleX(0.9419);transform-origin:0 0;">(5,400)</span>
<span style="left:303.25px;top:369.82px;font-size:8.6px;line-height:8.6px;color:#416BAE;font-weight:normal;transform:scaleX(0.9419);transform-origin:0 0;">(10,000)</span>
<span style="left:349.36px;top:369.82px;font-size:8.6px;line-height:8.6px;color:#416BAE;font-weight:normal;transform:scaleX(0.9419);transform-origin:0 0;">(9,850)</span>
<span style="left:390.36px;top:369.82px;font-size:8.6px;line-height:8.6px;color:#416BAE;font-weight:normal;transform:scaleX(0.9419);transform-origin:0 0;">(9,700)</span>
<span style="left:432.36px;top:369.82px;font-size:8.6px;line-height:8.6px;color:#416BAE;font-weight:normal;transform:scaleX(0.9419);transform-origin:0 0;">(9,550)</span>
<span style="left:474.36px;top:369.82px;font-size:8.6px;line-height:8.6px;color:#416BAE;font-weight:normal;transform:scaleX(0.9419);transform-origin:0 0;">(9,400)</span>
<span style="left:515.36px;top:369.82px;font-size:8.6px;line-height:8.6px;color:#416BAE;font-weight:normal;transform:scaleX(0.9419);transform-origin:0 0;">(9,250)</span>
<span style="left:557.86px;top:369.82px;font-size:8.6px;line-height:8.6px;color:#416BAE;font-weight:normal;transform:scaleX(0.9419);transform-origin:0 0;">(9,100)</span>
<span style="left:599.36px;top:369.82px;font-size:8.6px;line-height:8.6px;color:#416BAE;font-weight:normal;transform:scaleX(0.9419);transform-origin:0 0;">(8,950)</span>
<span style="left:645.86px;top:369.82px;font-size:8.6px;line-height:8.6px;color:#416BAE;font-weight:normal;transform:scaleX(0.9419);transform-origin:0 0;">(8,800)</span>
<span style="left:687.36px;top:369.82px;font-size:8.6px;line-height:8.6px;color:#416BAE;font-weight:normal;transform:scaleX(0.9419);transform-origin:0 0;">(8,650)</span>
<span style="left:729.36px;top:369.82px;font-size:8.6px;line-height:8.6px;color:#416BAE;font-weight:normal;transform:scaleX(0.9419);transform-origin:0 0;">(8,500)</span>
<span style="left:770.86px;top:369.82px;font-size:8.6px;line-height:8.6px;color:#416BAE;font-weight:normal;transform:scaleX(0.9419);transform-origin:0 0;">(8,350)</span>
<span style="left:815.36px;top:369.82px;font-size:8.6px;line-height:8.6px;color:#416BAE;font-weight:normal;transform:scaleX(0.9419);transform-origin:0 0;">(8,200)</span>
<span style="left:857.86px;top:369.82px;font-size:8.6px;line-height:8.6px;color:#416BAE;font-weight:normal;transform:scaleX(0.9419);transform-origin:0 0;">(8,050)</span>
<span style="left:899.36px;top:369.82px;font-size:8.6px;line-height:8.6px;color:#416BAE;font-weight:normal;transform:scaleX(0.9419);transform-origin:0 0;">(7,900)</span>
<span style="left:303.25px;top:382.32px;font-size:8.6px;line-height:8.6px;color:#416BAE;font-weight:normal;transform:scaleX(0.9419);transform-origin:0 0;">(90,473)</span>
<span style="left:341.55px;top:382.32px;font-size:8.6px;line-height:8.6px;color:#416BAE;font-weight:normal;transform:scaleX(0.9419);transform-origin:0 0;">(111,132)</span>
<span style="left:385.85px;top:382.32px;font-size:8.6px;line-height:8.6px;color:#416BAE;font-weight:normal;transform:scaleX(0.9419);transform-origin:0 0;">(98,148)</span>
<span style="left:423.95px;top:382.32px;font-size:8.6px;line-height:8.6px;color:#416BAE;font-weight:normal;transform:scaleX(0.9419);transform-origin:0 0;">(116,576)</span>
<span style="left:465.35px;top:382.32px;font-size:8.6px;line-height:8.6px;color:#416BAE;font-weight:normal;transform:scaleX(0.9419);transform-origin:0 0;">(101,135)</span>
<span style="left:506.35px;top:382.32px;font-size:8.6px;line-height:8.6px;color:#416BAE;font-weight:normal;transform:scaleX(0.9419);transform-origin:0 0;">(107,398)</span>
<span style="left:548.85px;top:382.32px;font-size:8.6px;line-height:8.6px;color:#416BAE;font-weight:normal;transform:scaleX(0.9419);transform-origin:0 0;">(103,962)</span>
<span style="left:590.35px;top:382.32px;font-size:8.6px;line-height:8.6px;color:#416BAE;font-weight:normal;transform:scaleX(0.9419);transform-origin:0 0;">(108,958)</span>
<span style="left:638.05px;top:382.32px;font-size:8.6px;line-height:8.6px;color:#416BAE;font-weight:normal;transform:scaleX(0.9419);transform-origin:0 0;">(111,458)</span>
<span style="left:678.35px;top:382.32px;font-size:8.6px;line-height:8.6px;color:#416BAE;font-weight:normal;transform:scaleX(0.9419);transform-origin:0 0;">(122,398)</span>
<span style="left:720.35px;top:382.32px;font-size:8.6px;line-height:8.6px;color:#416BAE;font-weight:normal;transform:scaleX(0.9419);transform-origin:0 0;">(124,788)</span>
<span style="left:761.85px;top:382.32px;font-size:8.6px;line-height:8.6px;color:#416BAE;font-weight:normal;transform:scaleX(0.9419);transform-origin:0 0;">(122,992)</span>
<span style="left:806.35px;top:382.32px;font-size:8.6px;line-height:8.6px;color:#416BAE;font-weight:normal;transform:scaleX(0.9419);transform-origin:0 0;">(105,398)</span>
<span style="left:848.85px;top:382.32px;font-size:8.6px;line-height:8.6px;color:#416BAE;font-weight:normal;transform:scaleX(0.9419);transform-origin:0 0;">(126,098)</span>
<span style="left:890.95px;top:382.32px;font-size:8.6px;line-height:8.6px;color:#416BAE;font-weight:normal;transform:scaleX(0.9419);transform-origin:0 0;">(113,005)</span>
<span style="left:301.54px;top:394.82px;font-size:8.6px;line-height:8.6px;color:#FFFFFF;font-weight:normal;transform:scaleX(0.9419);transform-origin:0 0;">473,375</span>
<span style="left:343.14px;top:394.82px;font-size:8.6px;line-height:8.6px;color:#FFFFFF;font-weight:normal;transform:scaleX(0.9419);transform-origin:0 0;">576,666</span>
<span style="left:384.74px;top:394.82px;font-size:8.6px;line-height:8.6px;color:#FFFFFF;font-weight:normal;transform:scaleX(0.9419);transform-origin:0 0;">511,750</span>
<span style="left:426.14px;top:394.82px;font-size:8.6px;line-height:8.6px;color:#FFFFFF;font-weight:normal;transform:scaleX(0.9419);transform-origin:0 0;">603,890</span>
<span style="left:468.14px;top:394.82px;font-size:8.6px;line-height:8.6px;color:#FFFFFF;font-weight:normal;transform:scaleX(0.9419);transform-origin:0 0;">526,685</span>
<span style="left:509.14px;top:394.82px;font-size:8.6px;line-height:8.6px;color:#FFFFFF;font-weight:normal;transform:scaleX(0.9419);transform-origin:0 0;">558,000</span>
<span style="left:551.64px;top:394.82px;font-size:8.6px;line-height:8.6px;color:#FFFFFF;font-weight:normal;transform:scaleX(0.9419);transform-origin:0 0;">540,820</span>
<span style="left:593.14px;top:394.82px;font-size:8.6px;line-height:8.6px;color:#FFFFFF;font-weight:normal;transform:scaleX(0.9419);transform-origin:0 0;">565,800</span>
<span style="left:639.64px;top:394.82px;font-size:8.6px;line-height:8.6px;color:#FFFFFF;font-weight:normal;transform:scaleX(0.9419);transform-origin:0 0;">578,300</span>
<span style="left:681.14px;top:394.82px;font-size:8.6px;line-height:8.6px;color:#FFFFFF;font-weight:normal;transform:scaleX(0.9419);transform-origin:0 0;">633,000</span>
<span style="left:723.14px;top:394.82px;font-size:8.6px;line-height:8.6px;color:#FFFFFF;font-weight:normal;transform:scaleX(0.9419);transform-origin:0 0;">644,950</span>
<span style="left:764.64px;top:394.82px;font-size:8.6px;line-height:8.6px;color:#FFFFFF;font-weight:normal;transform:scaleX(0.9419);transform-origin:0 0;">635,970</span>
<span style="left:809.14px;top:394.82px;font-size:8.6px;line-height:8.6px;color:#FFFFFF;font-weight:normal;transform:scaleX(0.9419);transform-origin:0 0;">546,400</span>
<span style="left:851.64px;top:394.82px;font-size:8.6px;line-height:8.6px;color:#FFFFFF;font-weight:normal;transform:scaleX(0.9419);transform-origin:0 0;">649,901</span>
<span style="left:893.14px;top:394.82px;font-size:8.6px;line-height:8.6px;color:#FFFFFF;font-weight:normal;transform:scaleX(0.9419);transform-origin:0 0;">584,435</span>
<span style="left:932.59px;top:394.82px;font-size:8.6px;line-height:8.6px;color:#FFFFFF;font-weight:normal;transform:scaleX(0.9419);transform-origin:0 0;">6,849,206</span>
<span style="left:298.75px;top:407.32px;font-size:8.6px;line-height:8.6px;color:#FFFFFF;font-weight:normal;transform:scaleX(0.9419);transform-origin:0 0;">(100,923)</span>
<span style="left:340.35px;top:407.32px;font-size:8.6px;line-height:8.6px;color:#FFFFFF;font-weight:normal;transform:scaleX(0.9419);transform-origin:0 0;">(121,432)</span>
<span style="left:381.35px;top:407.32px;font-size:8.6px;line-height:8.6px;color:#FFFFFF;font-weight:normal;transform:scaleX(0.9419);transform-origin:0 0;">(108,298)</span>
<span style="left:423.35px;top:407.32px;font-size:8.6px;line-height:8.6px;color:#FFFFFF;font-weight:normal;transform:scaleX(0.9419);transform-origin:0 0;">(126,576)</span>
<span style="left:465.95px;top:407.32px;font-size:8.6px;line-height:8.6px;color:#FFFFFF;font-weight:normal;transform:scaleX(0.9419);transform-origin:0 0;">(110,985)</span>
<span style="left:506.95px;top:407.32px;font-size:8.6px;line-height:8.6px;color:#FFFFFF;font-weight:normal;transform:scaleX(0.9419);transform-origin:0 0;">(117,098)</span>
<span style="left:549.45px;top:407.32px;font-size:8.6px;line-height:8.6px;color:#FFFFFF;font-weight:normal;transform:scaleX(0.9419);transform-origin:0 0;">(113,512)</span>
<span style="left:590.95px;top:407.32px;font-size:8.6px;line-height:8.6px;color:#FFFFFF;font-weight:normal;transform:scaleX(0.9419);transform-origin:0 0;">(118,358)</span>
<span style="left:636.85px;top:407.32px;font-size:8.6px;line-height:8.6px;color:#FFFFFF;font-weight:normal;transform:scaleX(0.9419);transform-origin:0 0;">(120,708)</span>
<span style="left:678.35px;top:407.32px;font-size:8.6px;line-height:8.6px;color:#FFFFFF;font-weight:normal;transform:scaleX(0.9419);transform-origin:0 0;">(131,498)</span>
<span style="left:720.35px;top:407.32px;font-size:8.6px;line-height:8.6px;color:#FFFFFF;font-weight:normal;transform:scaleX(0.9419);transform-origin:0 0;">(133,738)</span>
<span style="left:761.85px;top:407.32px;font-size:8.6px;line-height:8.6px;color:#FFFFFF;font-weight:normal;transform:scaleX(0.9419);transform-origin:0 0;">(131,792)</span>
<span style="left:806.95px;top:407.32px;font-size:8.6px;line-height:8.6px;color:#FFFFFF;font-weight:normal;transform:scaleX(0.9419);transform-origin:0 0;">(114,048)</span>
<span style="left:848.85px;top:407.32px;font-size:8.6px;line-height:8.6px;color:#FFFFFF;font-weight:normal;transform:scaleX(0.9419);transform-origin:0 0;">(134,598)</span>
<span style="left:890.35px;top:407.32px;font-size:8.6px;line-height:8.6px;color:#FFFFFF;font-weight:normal;transform:scaleX(0.9419);transform-origin:0 0;">(121,355)</span>
<span style="left:932.59px;top:407.32px;font-size:8.6px;line-height:8.6px;color:#FFFFFF;font-weight:normal;transform:scaleX(0.9419);transform-origin:0 0;">########</span>
<span style="left:301.54px;top:419.82px;font-size:8.6px;line-height:8.6px;color:#416BAE;font-weight:normal;transform:scaleX(0.9419);transform-origin:0 0;">372,452</span>
<span style="left:343.14px;top:419.82px;font-size:8.6px;line-height:8.6px;color:#416BAE;font-weight:normal;transform:scaleX(0.9419);transform-origin:0 0;">455,234</span>
<span style="left:384.14px;top:419.82px;font-size:8.6px;line-height:8.6px;color:#416BAE;font-weight:normal;transform:scaleX(0.9419);transform-origin:0 0;">403,452</span>
<span style="left:426.14px;top:419.82px;font-size:8.6px;line-height:8.6px;color:#416BAE;font-weight:normal;transform:scaleX(0.9419);transform-origin:0 0;">477,314</span>
<span style="left:468.14px;top:419.82px;font-size:8.6px;line-height:8.6px;color:#416BAE;font-weight:normal;transform:scaleX(0.9419);transform-origin:0 0;">415,700</span>
<span style="left:509.14px;top:419.82px;font-size:8.6px;line-height:8.6px;color:#416BAE;font-weight:normal;transform:scaleX(0.9419);transform-origin:0 0;">440,902</span>
<span style="left:551.64px;top:419.82px;font-size:8.6px;line-height:8.6px;color:#416BAE;font-weight:normal;transform:scaleX(0.9419);transform-origin:0 0;">427,308</span>
<span style="left:593.14px;top:419.82px;font-size:8.6px;line-height:8.6px;color:#416BAE;font-weight:normal;transform:scaleX(0.9419);transform-origin:0 0;">447,442</span>
<span style="left:639.64px;top:419.82px;font-size:8.6px;line-height:8.6px;color:#416BAE;font-weight:normal;transform:scaleX(0.9419);transform-origin:0 0;">457,592</span>
<span style="left:681.14px;top:419.82px;font-size:8.6px;line-height:8.6px;color:#416BAE;font-weight:normal;transform:scaleX(0.9419);transform-origin:0 0;">501,502</span>
<span style="left:723.74px;top:419.82px;font-size:8.6px;line-height:8.6px;color:#416BAE;font-weight:normal;transform:scaleX(0.9419);transform-origin:0 0;">511,212</span>
<span style="left:764.64px;top:419.82px;font-size:8.6px;line-height:8.6px;color:#416BAE;font-weight:normal;transform:scaleX(0.9419);transform-origin:0 0;">504,178</span>
<span style="left:809.14px;top:419.82px;font-size:8.6px;line-height:8.6px;color:#416BAE;font-weight:normal;transform:scaleX(0.9419);transform-origin:0 0;">432,352</span>
<span style="left:851.64px;top:419.82px;font-size:8.6px;line-height:8.6px;color:#416BAE;font-weight:normal;transform:scaleX(0.9419);transform-origin:0 0;">515,303</span>
<span style="left:893.14px;top:419.82px;font-size:8.6px;line-height:8.6px;color:#416BAE;font-weight:normal;transform:scaleX(0.9419);transform-origin:0 0;">463,080</span>
<span style="left:932.59px;top:419.82px;font-size:8.6px;line-height:8.6px;color:#416BAE;font-weight:normal;transform:scaleX(0.9419);transform-origin:0 0;">5,414,284</span>
<span style="left:301.54px;top:432.32px;font-size:8.6px;line-height:8.6px;color:#416BAE;font-weight:normal;transform:scaleX(0.9419);transform-origin:0 0;">371,902</span>
<span style="left:343.14px;top:432.32px;font-size:8.6px;line-height:8.6px;color:#416BAE;font-weight:normal;transform:scaleX(0.9419);transform-origin:0 0;">454,684</span>
<span style="left:384.14px;top:432.32px;font-size:8.6px;line-height:8.6px;color:#416BAE;font-weight:normal;transform:scaleX(0.9419);transform-origin:0 0;">402,902</span>
<span style="left:426.14px;top:432.32px;font-size:8.6px;line-height:8.6px;color:#416BAE;font-weight:normal;transform:scaleX(0.9419);transform-origin:0 0;">476,764</span>
<span style="left:468.14px;top:432.32px;font-size:8.6px;line-height:8.6px;color:#416BAE;font-weight:normal;transform:scaleX(0.9419);transform-origin:0 0;">415,150</span>
<span style="left:509.14px;top:432.32px;font-size:8.6px;line-height:8.6px;color:#416BAE;font-weight:normal;transform:scaleX(0.9419);transform-origin:0 0;">440,352</span>
<span style="left:551.64px;top:432.32px;font-size:8.6px;line-height:8.6px;color:#416BAE;font-weight:normal;transform:scaleX(0.9419);transform-origin:0 0;">426,758</span>
<span style="left:593.14px;top:432.32px;font-size:8.6px;line-height:8.6px;color:#416BAE;font-weight:normal;transform:scaleX(0.9419);transform-origin:0 0;">446,892</span>
<span style="left:639.64px;top:432.32px;font-size:8.6px;line-height:8.6px;color:#416BAE;font-weight:normal;transform:scaleX(0.9419);transform-origin:0 0;">457,042</span>
<span style="left:681.14px;top:432.32px;font-size:8.6px;line-height:8.6px;color:#416BAE;font-weight:normal;transform:scaleX(0.9419);transform-origin:0 0;">500,952</span>
<span style="left:723.14px;top:432.32px;font-size:8.6px;line-height:8.6px;color:#416BAE;font-weight:normal;transform:scaleX(0.9419);transform-origin:0 0;">510,662</span>
<span style="left:764.64px;top:432.32px;font-size:8.6px;line-height:8.6px;color:#416BAE;font-weight:normal;transform:scaleX(0.9419);transform-origin:0 0;">503,628</span>
<span style="left:809.14px;top:432.32px;font-size:8.6px;line-height:8.6px;color:#416BAE;font-weight:normal;transform:scaleX(0.9419);transform-origin:0 0;">431,802</span>
<span style="left:851.64px;top:432.32px;font-size:8.6px;line-height:8.6px;color:#416BAE;font-weight:normal;transform:scaleX(0.9419);transform-origin:0 0;">514,753</span>
<span style="left:893.14px;top:432.32px;font-size:8.6px;line-height:8.6px;color:#416BAE;font-weight:normal;transform:scaleX(0.9419);transform-origin:0 0;">462,530</span>
<span style="left:303.25px;top:457.32px;font-size:8.6px;line-height:8.6px;color:#416BAE;font-weight:normal;transform:scaleX(0.9419);transform-origin:0 0;">(50,000)</span>
<span style="left:303.25px;top:482.32px;font-size:8.6px;line-height:8.6px;color:#416BAE;font-weight:normal;transform:scaleX(0.9419);transform-origin:0 0;">(50,000)</span>
<span style="left:303.25px;top:507.32px;font-size:8.6px;line-height:8.6px;color:#416BAE;font-weight:normal;transform:scaleX(0.9419);transform-origin:0 0;">(50,000)</span>
<div style="position:absolute;left:355.0px;top:462.0px;width:3.0px;height:0.8000000000000114px;background:#C3CCDA;"></div>
<div style="position:absolute;left:396.0px;top:462.0px;width:3.0px;height:0.8000000000000114px;background:#C3CCDA;"></div>
<div style="position:absolute;left:437.5px;top:462.0px;width:3.0px;height:0.8000000000000114px;background:#C3CCDA;"></div>
<div style="position:absolute;left:479.5px;top:462.0px;width:3.0px;height:0.8000000000000114px;background:#C3CCDA;"></div>
<div style="position:absolute;left:521.0px;top:462.0px;width:3.0px;height:0.8000000000000114px;background:#C3CCDA;"></div>
<div style="position:absolute;left:562.8px;top:462.0px;width:3.0px;height:0.8000000000000114px;background:#C3CCDA;"></div>
<div style="position:absolute;left:604.8px;top:462.0px;width:3.0px;height:0.8000000000000114px;background:#C3CCDA;"></div>
<div style="position:absolute;left:648.8px;top:462.0px;width:3.0px;height:0.8000000000000114px;background:#C3CCDA;"></div>
<div style="position:absolute;left:692.8px;top:462.0px;width:3.0px;height:0.8000000000000114px;background:#C3CCDA;"></div>
<div style="position:absolute;left:734.5px;top:462.0px;width:3.0px;height:0.8000000000000114px;background:#C3CCDA;"></div>
<div style="position:absolute;left:776.2px;top:462.0px;width:3.0px;height:0.8000000000000114px;background:#C3CCDA;"></div>
<div style="position:absolute;left:819.2px;top:462.0px;width:3.0px;height:0.8000000000000114px;background:#C3CCDA;"></div>
<div style="position:absolute;left:862.8px;top:462.0px;width:3.0px;height:0.8000000000000114px;background:#C3CCDA;"></div>
<div style="position:absolute;left:904.8px;top:462.0px;width:3.0px;height:0.8000000000000114px;background:#C3CCDA;"></div>
<div style="position:absolute;left:355.0px;top:474.5px;width:3.0px;height:0.8000000000000114px;background:#C3CCDA;"></div>
<div style="position:absolute;left:396.0px;top:474.5px;width:3.0px;height:0.8000000000000114px;background:#C3CCDA;"></div>
<div style="position:absolute;left:437.5px;top:474.5px;width:3.0px;height:0.8000000000000114px;background:#C3CCDA;"></div>
<div style="position:absolute;left:479.5px;top:474.5px;width:3.0px;height:0.8000000000000114px;background:#C3CCDA;"></div>
<div style="position:absolute;left:521.0px;top:474.5px;width:3.0px;height:0.8000000000000114px;background:#C3CCDA;"></div>
<div style="position:absolute;left:562.8px;top:474.5px;width:3.0px;height:0.8000000000000114px;background:#C3CCDA;"></div>
<div style="position:absolute;left:604.8px;top:474.5px;width:3.0px;height:0.8000000000000114px;background:#C3CCDA;"></div>
<div style="position:absolute;left:648.8px;top:474.5px;width:3.0px;height:0.8000000000000114px;background:#C3CCDA;"></div>
<div style="position:absolute;left:692.8px;top:474.5px;width:3.0px;height:0.8000000000000114px;background:#C3CCDA;"></div>
<div style="position:absolute;left:734.5px;top:474.5px;width:3.0px;height:0.8000000000000114px;background:#C3CCDA;"></div>
<div style="position:absolute;left:776.2px;top:474.5px;width:3.0px;height:0.8000000000000114px;background:#C3CCDA;"></div>
<div style="position:absolute;left:819.2px;top:474.5px;width:3.0px;height:0.8000000000000114px;background:#C3CCDA;"></div>
<div style="position:absolute;left:862.8px;top:474.5px;width:3.0px;height:0.8000000000000114px;background:#C3CCDA;"></div>
<div style="position:absolute;left:904.8px;top:474.5px;width:3.0px;height:0.8000000000000114px;background:#C3CCDA;"></div>
<div style="position:absolute;left:355.0px;top:512.0px;width:3.0px;height:0.8000000000000682px;background:#C3CCDA;"></div>
<div style="position:absolute;left:396.0px;top:512.0px;width:3.0px;height:0.8000000000000682px;background:#C3CCDA;"></div>
<div style="position:absolute;left:437.5px;top:512.0px;width:3.0px;height:0.8000000000000682px;background:#C3CCDA;"></div>
<div style="position:absolute;left:479.5px;top:512.0px;width:3.0px;height:0.8000000000000682px;background:#C3CCDA;"></div>
<div style="position:absolute;left:521.0px;top:512.0px;width:3.0px;height:0.8000000000000682px;background:#C3CCDA;"></div>
<div style="position:absolute;left:562.8px;top:512.0px;width:3.0px;height:0.8000000000000682px;background:#C3CCDA;"></div>
<div style="position:absolute;left:604.8px;top:512.0px;width:3.0px;height:0.8000000000000682px;background:#C3CCDA;"></div>
<div style="position:absolute;left:648.8px;top:512.0px;width:3.0px;height:0.8000000000000682px;background:#C3CCDA;"></div>
<div style="position:absolute;left:692.8px;top:512.0px;width:3.0px;height:0.8000000000000682px;background:#C3CCDA;"></div>
<div style="position:absolute;left:734.5px;top:512.0px;width:3.0px;height:0.8000000000000682px;background:#C3CCDA;"></div>
<div style="position:absolute;left:776.2px;top:512.0px;width:3.0px;height:0.8000000000000682px;background:#C3CCDA;"></div>
<div style="position:absolute;left:819.2px;top:512.0px;width:3.0px;height:0.8000000000000682px;background:#C3CCDA;"></div>
<div style="position:absolute;left:862.8px;top:512.0px;width:3.0px;height:0.8000000000000682px;background:#C3CCDA;"></div>
<div style="position:absolute;left:904.8px;top:512.0px;width:3.0px;height:0.8000000000000682px;background:#C3CCDA;"></div>
<div style="position:absolute;left:355.0px;top:524.5px;width:3.0px;height:0.8000000000000682px;background:#C3CCDA;"></div>
<div style="position:absolute;left:396.0px;top:524.5px;width:3.0px;height:0.8000000000000682px;background:#C3CCDA;"></div>
<div style="position:absolute;left:437.5px;top:524.5px;width:3.0px;height:0.8000000000000682px;background:#C3CCDA;"></div>
<div style="position:absolute;left:479.5px;top:524.5px;width:3.0px;height:0.8000000000000682px;background:#C3CCDA;"></div>
<div style="position:absolute;left:521.0px;top:524.5px;width:3.0px;height:0.8000000000000682px;background:#C3CCDA;"></div>
<div style="position:absolute;left:562.8px;top:524.5px;width:3.0px;height:0.8000000000000682px;background:#C3CCDA;"></div>
<div style="position:absolute;left:604.8px;top:524.5px;width:3.0px;height:0.8000000000000682px;background:#C3CCDA;"></div>
<div style="position:absolute;left:648.8px;top:524.5px;width:3.0px;height:0.8000000000000682px;background:#C3CCDA;"></div>
<div style="position:absolute;left:692.8px;top:524.5px;width:3.0px;height:0.8000000000000682px;background:#C3CCDA;"></div>
<div style="position:absolute;left:734.5px;top:524.5px;width:3.0px;height:0.8000000000000682px;background:#C3CCDA;"></div>
<div style="position:absolute;left:776.2px;top:524.5px;width:3.0px;height:0.8000000000000682px;background:#C3CCDA;"></div>
<div style="position:absolute;left:819.2px;top:524.5px;width:3.0px;height:0.8000000000000682px;background:#C3CCDA;"></div>
<div style="position:absolute;left:862.8px;top:524.5px;width:3.0px;height:0.8000000000000682px;background:#C3CCDA;"></div>
<div style="position:absolute;left:904.8px;top:524.5px;width:3.0px;height:0.8000000000000682px;background:#C3CCDA;"></div>
<div style="position:absolute;left:355.0px;top:537.0px;width:3.0px;height:0.8000000000000682px;background:#C3CCDA;"></div>
<div style="position:absolute;left:396.0px;top:537.0px;width:3.0px;height:0.8000000000000682px;background:#C3CCDA;"></div>
<div style="position:absolute;left:437.5px;top:537.0px;width:3.0px;height:0.8000000000000682px;background:#C3CCDA;"></div>
<div style="position:absolute;left:479.5px;top:537.0px;width:3.0px;height:0.8000000000000682px;background:#C3CCDA;"></div>
<div style="position:absolute;left:521.0px;top:537.0px;width:3.0px;height:0.8000000000000682px;background:#C3CCDA;"></div>
<div style="position:absolute;left:562.8px;top:537.0px;width:3.0px;height:0.8000000000000682px;background:#C3CCDA;"></div>
<div style="position:absolute;left:604.8px;top:537.0px;width:3.0px;height:0.8000000000000682px;background:#C3CCDA;"></div>
<div style="position:absolute;left:648.8px;top:537.0px;width:3.0px;height:0.8000000000000682px;background:#C3CCDA;"></div>
<div style="position:absolute;left:692.8px;top:537.0px;width:3.0px;height:0.8000000000000682px;background:#C3CCDA;"></div>
<div style="position:absolute;left:734.5px;top:537.0px;width:3.0px;height:0.8000000000000682px;background:#C3CCDA;"></div>
<div style="position:absolute;left:776.2px;top:537.0px;width:3.0px;height:0.8000000000000682px;background:#C3CCDA;"></div>
<div style="position:absolute;left:819.2px;top:537.0px;width:3.0px;height:0.8000000000000682px;background:#C3CCDA;"></div>
<div style="position:absolute;left:862.8px;top:537.0px;width:3.0px;height:0.8000000000000682px;background:#C3CCDA;"></div>
<div style="position:absolute;left:904.8px;top:537.0px;width:3.0px;height:0.8000000000000682px;background:#C3CCDA;"></div>
<div style="position:absolute;left:355.0px;top:549.5px;width:3.0px;height:0.8000000000000682px;background:#C3CCDA;"></div>
<div style="position:absolute;left:396.0px;top:549.5px;width:3.0px;height:0.8000000000000682px;background:#C3CCDA;"></div>
<div style="position:absolute;left:437.5px;top:549.5px;width:3.0px;height:0.8000000000000682px;background:#C3CCDA;"></div>
<div style="position:absolute;left:479.5px;top:549.5px;width:3.0px;height:0.8000000000000682px;background:#C3CCDA;"></div>
<div style="position:absolute;left:521.0px;top:549.5px;width:3.0px;height:0.8000000000000682px;background:#C3CCDA;"></div>
<div style="position:absolute;left:562.8px;top:549.5px;width:3.0px;height:0.8000000000000682px;background:#C3CCDA;"></div>
<div style="position:absolute;left:604.8px;top:549.5px;width:3.0px;height:0.8000000000000682px;background:#C3CCDA;"></div>
<div style="position:absolute;left:648.8px;top:549.5px;width:3.0px;height:0.8000000000000682px;background:#C3CCDA;"></div>
<div style="position:absolute;left:692.8px;top:549.5px;width:3.0px;height:0.8000000000000682px;background:#C3CCDA;"></div>
<div style="position:absolute;left:734.5px;top:549.5px;width:3.0px;height:0.8000000000000682px;background:#C3CCDA;"></div>
<div style="position:absolute;left:776.2px;top:549.5px;width:3.0px;height:0.8000000000000682px;background:#C3CCDA;"></div>
<div style="position:absolute;left:819.2px;top:549.5px;width:3.0px;height:0.8000000000000682px;background:#C3CCDA;"></div>
<div style="position:absolute;left:862.8px;top:549.5px;width:3.0px;height:0.8000000000000682px;background:#C3CCDA;"></div>
<div style="position:absolute;left:904.8px;top:549.5px;width:3.0px;height:0.8000000000000682px;background:#C3CCDA;"></div>
<div style="position:absolute;left:368.5px;top:487.0px;width:3.0px;height:0.8000000000000114px;background:#C3CCDA;"></div>
<div style="position:absolute;left:409.5px;top:487.0px;width:3.0px;height:0.8000000000000114px;background:#C3CCDA;"></div>
<div style="position:absolute;left:451.5px;top:487.0px;width:3.0px;height:0.8000000000000114px;background:#C3CCDA;"></div>
<div style="position:absolute;left:493.5px;top:487.0px;width:3.0px;height:0.8000000000000114px;background:#C3CCDA;"></div>
<div style="position:absolute;left:534.5px;top:487.0px;width:3.0px;height:0.8000000000000114px;background:#C3CCDA;"></div>
<div style="position:absolute;left:577.0px;top:487.0px;width:3.0px;height:0.8000000000000114px;background:#C3CCDA;"></div>
<div style="position:absolute;left:618.5px;top:487.0px;width:3.0px;height:0.8000000000000114px;background:#C3CCDA;"></div>
<div style="position:absolute;left:665.0px;top:487.0px;width:3.0px;height:0.8000000000000114px;background:#C3CCDA;"></div>
<div style="position:absolute;left:706.5px;top:487.0px;width:3.0px;height:0.8000000000000114px;background:#C3CCDA;"></div>
<div style="position:absolute;left:748.5px;top:487.0px;width:3.0px;height:0.8000000000000114px;background:#C3CCDA;"></div>
<div style="position:absolute;left:790.0px;top:487.0px;width:3.0px;height:0.8000000000000114px;background:#C3CCDA;"></div>
<div style="position:absolute;left:834.5px;top:487.0px;width:3.0px;height:0.8000000000000114px;background:#C3CCDA;"></div>
<div style="position:absolute;left:877.0px;top:487.0px;width:3.0px;height:0.8000000000000114px;background:#C3CCDA;"></div>
<div style="position:absolute;left:918.5px;top:487.0px;width:3.0px;height:0.8000000000000114px;background:#C3CCDA;"></div>
<div style="position:absolute;left:357px;top:557.6px;width:17px;height:1.0px;background:#C9D3E6;"></div>
<div style="position:absolute;left:398px;top:557.6px;width:17px;height:1.0px;background:#C9D3E6;"></div>
<div style="position:absolute;left:440px;top:557.6px;width:17px;height:1.0px;background:#C9D3E6;"></div>
<div style="position:absolute;left:482px;top:557.6px;width:17px;height:1.0px;background:#C9D3E6;"></div>
<div style="position:absolute;left:523px;top:557.6px;width:17px;height:1.0px;background:#C9D3E6;"></div>
<div style="position:absolute;left:565.5px;top:557.6px;width:17.0px;height:1.0px;background:#C9D3E6;"></div>
<div style="position:absolute;left:607px;top:557.6px;width:17px;height:1.0px;background:#C9D3E6;"></div>
<div style="position:absolute;left:653.5px;top:557.6px;width:17.0px;height:1.0px;background:#C9D3E6;"></div>
<div style="position:absolute;left:695px;top:557.6px;width:17px;height:1.0px;background:#C9D3E6;"></div>
<div style="position:absolute;left:737px;top:557.6px;width:17px;height:1.0px;background:#C9D3E6;"></div>
<div style="position:absolute;left:778.5px;top:557.6px;width:17.0px;height:1.0px;background:#C9D3E6;"></div>
<div style="position:absolute;left:823px;top:557.6px;width:17px;height:1.0px;background:#C9D3E6;"></div>
<div style="position:absolute;left:865.5px;top:557.6px;width:17.0px;height:1.0px;background:#C9D3E6;"></div>
<div style="position:absolute;left:907px;top:557.6px;width:17px;height:1.0px;background:#C9D3E6;"></div>
<div style="position:absolute;left:953px;top:557.6px;width:17px;height:1.0px;background:#C9D3E6;"></div>
<svg style="position:absolute;left:926px;top:353px" width="5" height="5"><path d="M0 0 L4 0 L0 4 Z" fill="#333"/></svg>
<svg style="position:absolute;left:926px;top:553.5px" width="5" height="5"><path d="M0 0 L4 0 L0 4 Z" fill="#333"/></svg>
<div style="position:absolute;left:987px;top:64px;width:13px;height:494px;background:#FAFAFA;"></div>
<div style="position:absolute;left:987px;top:64px;width:1px;height:494px;background:#E2E2E2;"></div>
<div style="position:absolute;left:990.8px;top:62.8px;width:6.400000000000091px;height:286.5px;background:#6E6E6E;border-radius:3px;"></div>
<svg style="position:absolute;left:988px;top:52px" width="12" height="8"><path d="M2.5 6.5 L5.5 2 L8.5 6.5 Z" fill="#555"/></svg>
<svg style="position:absolute;left:988px;top:551px" width="12" height="8"><path d="M2.5 2 L5.5 6.5 L8.5 2 Z" fill="#555"/></svg>
<div style="position:absolute;left:0px;top:558.8px;width:1000px;height:17.700000000000045px;background:#E5E8EC;"></div>
<div style="position:absolute;left:0px;top:576.5px;width:1000px;height:3.0px;background:#EEEEEE;"></div>
<div style="position:absolute;left:0px;top:579.5px;width:1000px;height:1.0px;background:#DEDEDE;"></div>
<svg style="position:absolute;left:0;top:558px" width="60" height="20"><g fill="none" stroke-width="1.1"><path d="M19.5 8 L16.5 11 L19.5 14" stroke="#B9BCC0"/><path d="M38 8 L41 11 L38 14" stroke="#5A5A5A"/></g></svg>
<span style="left:78.40px;top:565.24px;font-size:9.4px;line-height:9.4px;color:#2A2A2A;font-weight:normal;transform:scaleX(1.0109);transform-origin:0 0;">How To</span>
<div style="position:absolute;left:122px;top:561.5px;width:70px;height:14.5px;background:#F7F78E;"></div>
<span style="left:127.60px;top:565.24px;font-size:9.4px;line-height:9.4px;color:#2A2A2A;font-weight:normal;transform:scaleX(0.9577);transform-origin:0 0;">2025 Accounts</span>
<span style="left:205.00px;top:565.24px;font-size:9.4px;line-height:9.4px;color:#2A2A2A;font-weight:normal;transform:scaleX(0.9370);transform-origin:0 0;">2025 MRR Dashboard</span>
<span style="left:310.80px;top:565.24px;font-size:9.4px;line-height:9.4px;color:#2A2A2A;font-weight:normal;transform:scaleX(0.9128);transform-origin:0 0;">IS 2025</span>
<div style="position:absolute;left:352px;top:558.8px;width:41.5px;height:17.700000000000045px;background:#FFFFFF;"></div>
<span style="left:356.50px;top:563.24px;font-size:9.4px;line-height:9.4px;color:#222222;font-weight:bold;transform:scaleX(0.9178);transform-origin:0 0;">CF 2025</span>
<div style="position:absolute;left:356.5px;top:574px;width:33.0px;height:1.2999999999999545px;background:#2E7D50;"></div>
<span style="left:406.00px;top:565.24px;font-size:9.4px;line-height:9.4px;color:#2A2A2A;font-weight:normal;transform:scaleX(0.8897);transform-origin:0 0;">BS 2025</span>
<span style="left:456.50px;top:565.24px;font-size:9.4px;line-height:9.4px;color:#2A2A2A;font-weight:normal;transform:scaleX(0.9516);transform-origin:0 0;">Statements Summary 2025</span>
<div style="position:absolute;left:575.4px;top:561.5px;width:60.80000000000007px;height:14.5px;background:#F7F78E;"></div>
<span style="left:582.70px;top:565.24px;font-size:9.4px;line-height:9.4px;color:#2A2A2A;font-weight:normal;transform:scaleX(0.8707);transform-origin:0 0;">CAPEX 2025</span>
<div style="position:absolute;left:643px;top:561.5px;width:71.60000000000002px;height:14.5px;background:#F7F78E;"></div>
<span style="left:649.00px;top:565.24px;font-size:9.4px;line-height:9.4px;color:#2A2A2A;font-weight:normal;transform:scaleX(0.9577);transform-origin:0 0;">2026 Accounts</span>
<span style="left:726.80px;top:565.24px;font-size:9.4px;line-height:9.4px;color:#2A2A2A;font-weight:normal;transform:scaleX(0.9348);transform-origin:0 0;">2026 MRR Dashboard</span>
<span style="left:832.20px;top:565.24px;font-size:9.4px;line-height:9.4px;color:#2A2A2A;font-weight:normal;transform:scaleX(0.9035);transform-origin:0 0;">IS 2026</span>
<svg style="position:absolute;left:870px;top:558px" width="130" height="20">
<path d="M10 8 C8 10 8 15 10 17" fill="none" stroke="#555" stroke-width="1.2"/>
<g fill="#333"><rect x="19" y="10.5" width="1.3" height="1.3"/><rect x="21.5" y="10.5" width="1.3" height="1.3"/><rect x="24" y="10.5" width="1.3" height="1.3"/></g>
<g stroke="#333" stroke-width="1.1"><line x1="37" y1="11.5" x2="46" y2="11.5"/><line x1="41.5" y1="7" x2="41.5" y2="16"/></g>
<g fill="#555"><rect x="61.3" y="7.5" width="1.4" height="1.4"/><rect x="61.3" y="10.8" width="1.4" height="1.4"/><rect x="61.3" y="14.1" width="1.4" height="1.4"/></g>
<path d="M75.5 11.3 L79.5 8.5 L79.5 14 Z" fill="#555"/>
<rect x="84" y="8.5" width="22" height="6" rx="3" fill="#6E6E6E"/>
<path d="M111 8.5 L115 11.3 L111 14 Z" fill="#555"/>
</svg>
<div style="position:absolute;left:0px;top:580.5px;width:1000px;height:11.5px;background:#F3F3F3;"></div>
<span style="left:7.20px;top:583.89px;font-size:8.4px;line-height:8.4px;color:#444;font-weight:normal;transform:scaleX(0.7766);transform-origin:0 0;">Ready</span>
<span style="left:71.60px;top:583.89px;font-size:8.4px;line-height:8.4px;color:#222;font-weight:bold;transform:scaleX(0.7854);transform-origin:0 0;">Accessibility: Investigate</span>
<svg style="position:absolute;left:0;top:580px" width="200" height="14">
<g fill="none" stroke="#555" stroke-width="0.9"><rect x="39.5" y="3" width="8" height="8"/><circle cx="43.5" cy="8" r="1.8"/>
<path d="M60 4 L68 4"/><circle cx="64" cy="3" r="1"/><path d="M62 4.5 L62.5 8 L61 11.5 M66 4.5 L65.5 8 L67 11.5"/></g>
<rect x="40" y="3.5" width="7" height="2" fill="#777"/>
</svg>
<div style="position:absolute;left:804px;top:579px;width:27px;height:13px;background:#E0E0E0;"></div>
<svg style="position:absolute;left:800px;top:579.5px" width="200" height="14">
<g fill="none" stroke="#444" stroke-width="0.9">
<rect x="15.5" y="3.5" width="8.5" height="8"/><line x1="15.5" y1="6.2" x2="24" y2="6.2"/><line x1="15.5" y1="8.8" x2="24" y2="8.8"/><line x1="18.3" y1="3.5" x2="18.3" y2="11.5"/><line x1="21.2" y1="3.5" x2="21.2" y2="11.5"/>
<rect x="41.5" y="3.5" width="8.5" height="8"/><line x1="44.3" y1="3.5" x2="44.3" y2="11.5"/><line x1="47.2" y1="3.5" x2="47.2" y2="11.5"/>
<path d="M67.5 3.5 L76.5 3.5 L76.5 11.5 L67.5 11.5 Z"/><path d="M71.5 3.5 L71.5 7 L76.5 7"/>
</g>
<line x1="88" y1="7.5" x2="93" y2="7.5" stroke="#666" stroke-width="0.9"/>
<line x1="96" y1="7.5" x2="164" y2="7.5" stroke="#888" stroke-width="0.8"/>
<rect x="128" y="3.5" width="3" height="8" fill="#555"/>
<g stroke="#666" stroke-width="0.9"><line x1="165" y1="7.5" x2="170" y2="7.5"/><line x1="167.5" y1="5" x2="167.5" y2="10"/></g>
</svg>
<span style="left:978.00px;top:583.53px;font-size:8px;line-height:8px;color:#444;font-weight:normal;transform:scaleX(0.8309);transform-origin:0 0;">100%</span>
</body></html>
